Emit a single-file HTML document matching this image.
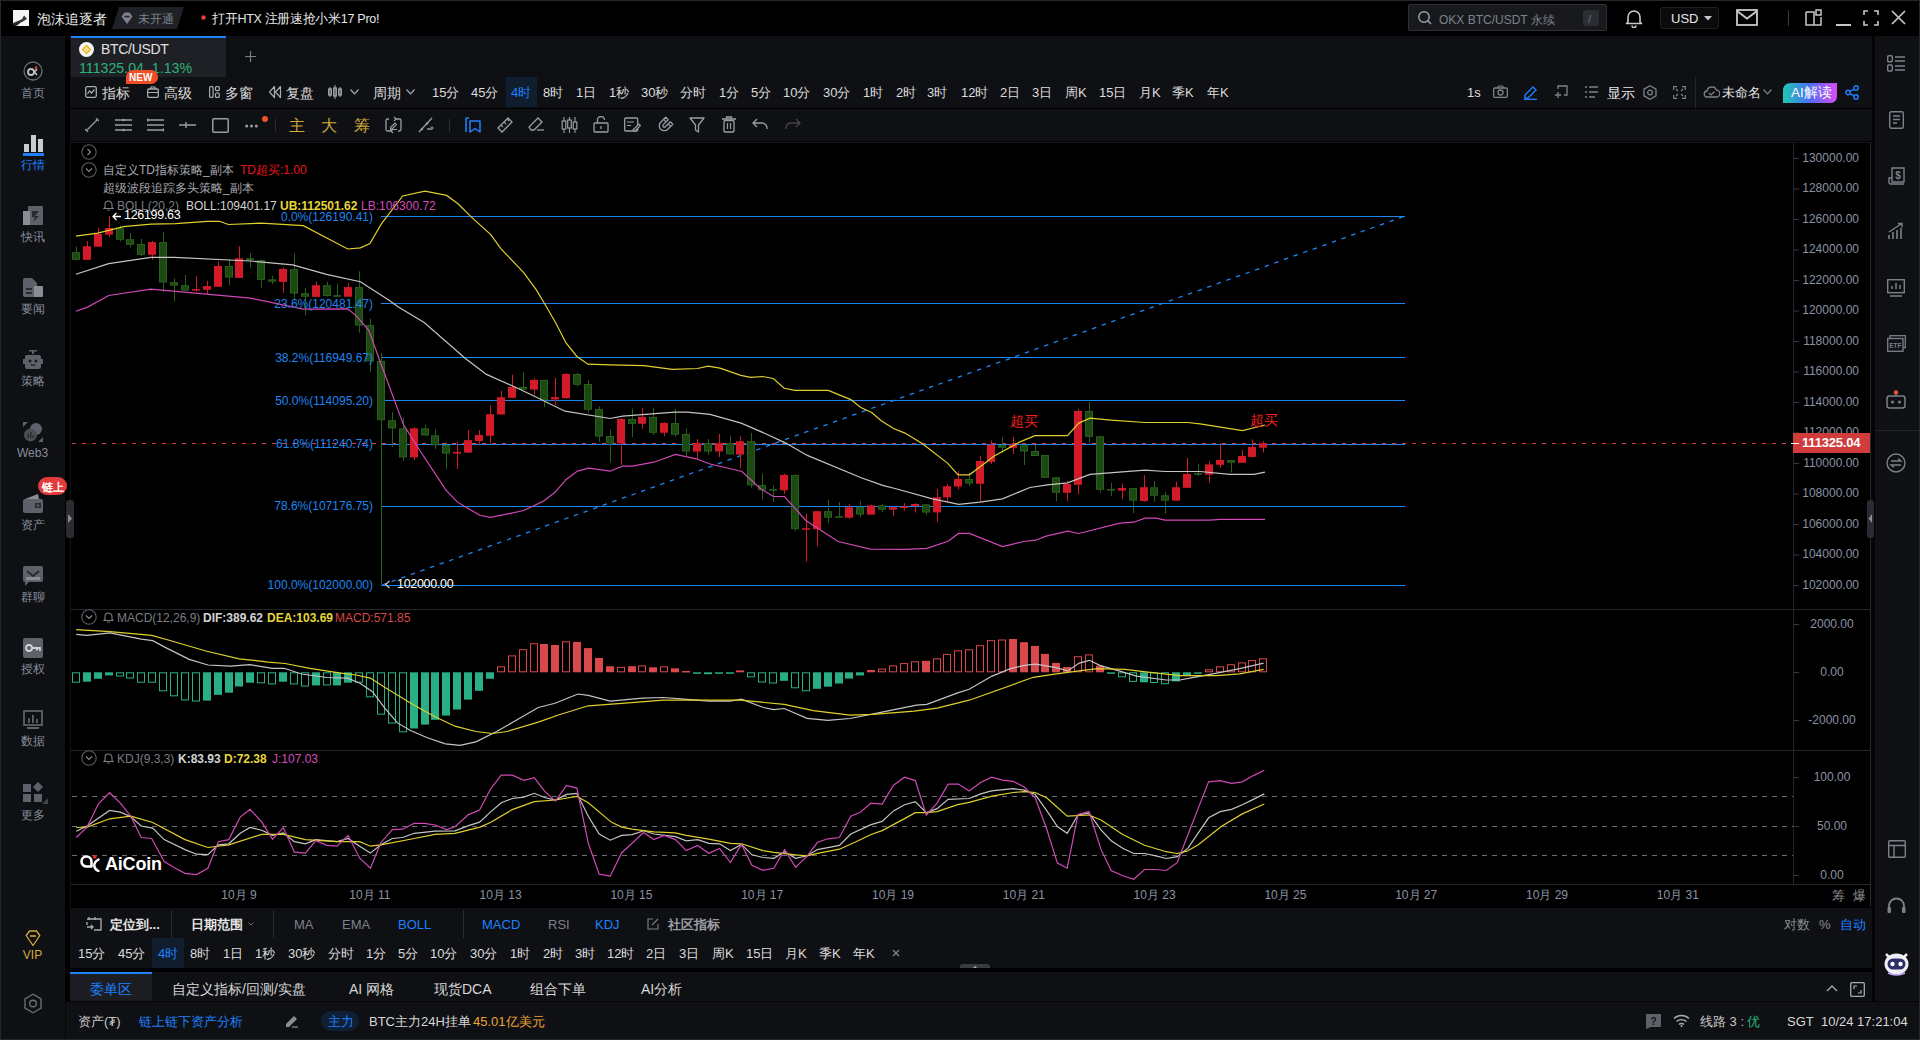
<!DOCTYPE html><html><head><meta charset="utf-8"><style>
html,body{margin:0;padding:0;width:1920px;height:1040px;overflow:hidden;background:#060607;}
body{position:relative;font-family:"Liberation Sans",sans-serif;}
.t{position:absolute;white-space:nowrap;}
.r{position:absolute;}
svg{position:absolute;left:0;top:0;}
</style></head><body>
<div class="r" style="left:0px;top:0px;width:1920px;height:36px;background:#000000;"></div>
<div class="r" style="left:0px;top:36px;width:65px;height:1004px;background:#0f1013;"></div>
<div class="r" style="left:65px;top:36px;width:5px;height:1004px;background:#000000;"></div>
<div class="r" style="left:1875px;top:36px;width:45px;height:966px;background:#0f1013;"></div>
<div class="r" style="left:1870px;top:36px;width:5px;height:966px;background:#050506;"></div>
<div class="r" style="left:70px;top:36px;width:1802px;height:41px;background:#0e0f12;"></div>
<div class="r" style="left:71px;top:38px;width:155px;height:39px;background:#1f2025;"></div>
<div class="r" style="left:71px;top:36px;width:155px;height:2px;background:#1e80ff;"></div>
<div class="r" style="left:70px;top:77px;width:1802px;height:31px;background:#0f1013;"></div>
<div class="r" style="left:70px;top:108px;width:1802px;height:1px;background:#000000;"></div>
<div class="r" style="left:70px;top:109px;width:1802px;height:32px;background:#0f1013;"></div>
<div class="r" style="left:70px;top:142px;width:1801px;height:766px;background:#000000;"></div>
<div class="r" style="left:70px;top:908px;width:1802px;height:60px;background:#0f1013;"></div>
<div class="r" style="left:152px;top:938px;width:32px;height:30px;background:#0f1d2c;"></div>
<div class="r" style="left:506px;top:77px;width:31px;height:30px;background:#0f1d2c;"></div>
<div class="r" style="left:70px;top:972px;width:1802px;height:30px;background:#0f1013;"></div>
<div class="r" style="left:70px;top:972px;width:82px;height:30px;background:#1b1d23;"></div>
<div class="r" style="left:70px;top:972px;width:82px;height:2px;background:#1e80ff;"></div>
<div class="r" style="left:65px;top:1001px;width:1855px;height:1px;background:#050506;"></div>
<div class="r" style="left:66px;top:1002px;width:1854px;height:38px;background:#0f1013;"></div>
<div class="r" style="left:65px;top:1002px;width:1px;height:38px;background:#050506;"></div>
<svg width="1920" height="1040">
<g stroke="#25262b" stroke-width="1" fill="none">
<line x1="71" y1="609.5" x2="1870" y2="609.5"/>
<line x1="71" y1="750.5" x2="1870" y2="750.5"/>
<line x1="71" y1="884.5" x2="1870" y2="884.5"/>
<line x1="1793.5" y1="142" x2="1793.5" y2="884"/>
<line x1="70.5" y1="142" x2="70.5" y2="907" stroke="#131417"/>
<line x1="70" y1="142.5" x2="1871" y2="142.5" stroke="#131417"/>
<line x1="1870.5" y1="142" x2="1870.5" y2="907"/>
</g>
<g stroke="#3a3b40" stroke-width="1">
<line x1="1794" y1="158.5" x2="1799" y2="158.5"/>
<line x1="1794" y1="189" x2="1799" y2="189"/>
<line x1="1794" y1="219.5" x2="1799" y2="219.5"/>
<line x1="1794" y1="250" x2="1799" y2="250"/>
<line x1="1794" y1="280.5" x2="1799" y2="280.5"/>
<line x1="1794" y1="311" x2="1799" y2="311"/>
<line x1="1794" y1="341.5" x2="1799" y2="341.5"/>
<line x1="1794" y1="372" x2="1799" y2="372"/>
<line x1="1794" y1="402.5" x2="1799" y2="402.5"/>
<line x1="1794" y1="433" x2="1799" y2="433"/>
<line x1="1794" y1="463.5" x2="1799" y2="463.5"/>
<line x1="1794" y1="494" x2="1799" y2="494"/>
<line x1="1794" y1="524.5" x2="1799" y2="524.5"/>
<line x1="1794" y1="555" x2="1799" y2="555"/>
<line x1="1794" y1="585.5" x2="1799" y2="585.5"/>
<line x1="1794" y1="624.5" x2="1799" y2="624.5"/>
<line x1="1794" y1="672.5" x2="1799" y2="672.5"/>
<line x1="1794" y1="720.5" x2="1799" y2="720.5"/>
<line x1="1794" y1="777.5" x2="1799" y2="777.5"/>
<line x1="1794" y1="826.5" x2="1799" y2="826.5"/>
<line x1="1794" y1="875.5" x2="1799" y2="875.5"/>
</g>
<g stroke="#6e6f74" stroke-width="1" stroke-dasharray="5,5">
<line x1="72" y1="796.5" x2="1793" y2="796.5"/>
<line x1="72" y1="826.5" x2="1793" y2="826.5"/>
<line x1="72" y1="855.5" x2="1793" y2="855.5"/>
</g>
<line x1="72" y1="443.5" x2="1793" y2="443.5" stroke="#e0393e" stroke-width="1" stroke-dasharray="4,6"/>
<g stroke="#1e86f0" stroke-width="1.2">
<line x1="381" y1="216.5" x2="1405" y2="216.5"/>
<line x1="381" y1="303.5" x2="1405" y2="303.5"/>
<line x1="381" y1="357.5" x2="1405" y2="357.5"/>
<line x1="381" y1="400.5" x2="1405" y2="400.5"/>
<line x1="381" y1="444.5" x2="1405" y2="444.5"/>
<line x1="381" y1="506.5" x2="1405" y2="506.5"/>
<line x1="381" y1="585.5" x2="1405" y2="585.5"/>
</g>
<line x1="382" y1="585" x2="1405" y2="216" stroke="#1e86f0" stroke-width="1.3" stroke-dasharray="4.5,5.7"/>
<line x1="76.5" y1="246.7" x2="76.5" y2="260.2" stroke="#2a601c" stroke-width="1"/>
<rect x="72.5" y="252.7" width="7" height="6.6" fill="#1c4812" stroke="#2a601c" stroke-width="1"/>
<line x1="87.5" y1="241" x2="87.5" y2="259.8" stroke="#d21a28" stroke-width="1"/>
<rect x="83" y="246.2" width="8" height="13.6" fill="#d21a28"/>
<line x1="98.5" y1="227.7" x2="98.5" y2="246.7" stroke="#d21a28" stroke-width="1"/>
<rect x="94" y="234" width="8" height="12.7" fill="#d21a28"/>
<line x1="109.5" y1="216" x2="109.5" y2="237.2" stroke="#d21a28" stroke-width="1"/>
<rect x="105" y="228" width="8" height="6.6" fill="#d21a28"/>
<line x1="120.5" y1="226" x2="120.5" y2="241.5" stroke="#2a601c" stroke-width="1"/>
<rect x="116.5" y="228.8" width="7" height="10.5" fill="#1c4812" stroke="#2a601c" stroke-width="1"/>
<line x1="130.5" y1="232.9" x2="130.5" y2="247.5" stroke="#2a601c" stroke-width="1"/>
<rect x="126.5" y="239.7" width="7" height="4.6" fill="#1c4812" stroke="#2a601c" stroke-width="1"/>
<line x1="141.5" y1="239" x2="141.5" y2="256" stroke="#2a601c" stroke-width="1"/>
<rect x="137.5" y="244.5" width="7" height="9.8" fill="#1c4812" stroke="#2a601c" stroke-width="1"/>
<line x1="152.5" y1="241" x2="152.5" y2="259.8" stroke="#d21a28" stroke-width="1"/>
<rect x="148" y="242.1" width="8" height="12.7" fill="#d21a28"/>
<line x1="163.5" y1="232" x2="163.5" y2="292.3" stroke="#2a601c" stroke-width="1"/>
<rect x="159.5" y="242.6" width="7" height="39.4" fill="#1c4812" stroke="#2a601c" stroke-width="1"/>
<line x1="174.5" y1="278.5" x2="174.5" y2="301.6" stroke="#2a601c" stroke-width="1"/>
<rect x="170.5" y="282.7" width="7" height="2.4" fill="#1c4812" stroke="#2a601c" stroke-width="1"/>
<line x1="185.5" y1="275" x2="185.5" y2="291.2" stroke="#2a601c" stroke-width="1"/>
<rect x="181.5" y="285.7" width="7" height="4.4" fill="#1c4812" stroke="#2a601c" stroke-width="1"/>
<line x1="196.5" y1="276.2" x2="196.5" y2="291.7" stroke="#d21a28" stroke-width="1"/>
<rect x="192" y="289.1" width="8" height="1.5" fill="#d21a28"/>
<line x1="207.5" y1="280.8" x2="207.5" y2="294" stroke="#d21a28" stroke-width="1"/>
<rect x="203" y="286" width="8" height="3.8" fill="#d21a28"/>
<line x1="218.5" y1="261.7" x2="218.5" y2="286.8" stroke="#d21a28" stroke-width="1"/>
<rect x="214" y="266" width="8" height="20.8" fill="#d21a28"/>
<line x1="229.5" y1="259.4" x2="229.5" y2="285.2" stroke="#2a601c" stroke-width="1"/>
<rect x="225.5" y="266.5" width="7" height="10.6" fill="#1c4812" stroke="#2a601c" stroke-width="1"/>
<line x1="239.5" y1="246.2" x2="239.5" y2="277.9" stroke="#d21a28" stroke-width="1"/>
<rect x="235" y="258.3" width="8" height="19.6" fill="#d21a28"/>
<line x1="250.5" y1="253" x2="250.5" y2="267.5" stroke="#2a601c" stroke-width="1"/>
<rect x="246.5" y="258.8" width="7" height="0.9" fill="#1c4812" stroke="#2a601c" stroke-width="1"/>
<line x1="261.5" y1="259.4" x2="261.5" y2="287.7" stroke="#2a601c" stroke-width="1"/>
<rect x="257.5" y="260.7" width="7" height="18.7" fill="#1c4812" stroke="#2a601c" stroke-width="1"/>
<line x1="272.5" y1="275.9" x2="272.5" y2="284" stroke="#2a601c" stroke-width="1"/>
<rect x="268.5" y="279.9" width="7" height="1.3" fill="#1c4812" stroke="#2a601c" stroke-width="1"/>
<line x1="283.5" y1="267.2" x2="283.5" y2="292.9" stroke="#d21a28" stroke-width="1"/>
<rect x="279" y="269" width="8" height="12.9" fill="#d21a28"/>
<line x1="294.5" y1="253.1" x2="294.5" y2="299.2" stroke="#2a601c" stroke-width="1"/>
<rect x="290.5" y="269.7" width="7" height="23.3" fill="#1c4812" stroke="#2a601c" stroke-width="1"/>
<line x1="305.5" y1="287.7" x2="305.5" y2="315.4" stroke="#2a601c" stroke-width="1"/>
<rect x="301.5" y="293.7" width="7" height="2.5" fill="#1c4812" stroke="#2a601c" stroke-width="1"/>
<line x1="316.5" y1="281.4" x2="316.5" y2="296.9" stroke="#d21a28" stroke-width="1"/>
<rect x="312" y="285.2" width="8" height="11.7" fill="#d21a28"/>
<line x1="327.5" y1="281.9" x2="327.5" y2="296.7" stroke="#2a601c" stroke-width="1"/>
<rect x="323.5" y="285.7" width="7" height="9.8" fill="#1c4812" stroke="#2a601c" stroke-width="1"/>
<line x1="337.5" y1="283.7" x2="337.5" y2="296.7" stroke="#2a601c" stroke-width="1"/>
<rect x="333.5" y="295.7" width="7" height="0.5" fill="#1c4812" stroke="#2a601c" stroke-width="1"/>
<line x1="348.5" y1="283.1" x2="348.5" y2="296.7" stroke="#d21a28" stroke-width="1"/>
<rect x="344" y="287.1" width="8" height="9.6" fill="#d21a28"/>
<line x1="359.5" y1="271.3" x2="359.5" y2="332.7" stroke="#2a601c" stroke-width="1"/>
<rect x="355.5" y="287.6" width="7" height="37.5" fill="#1c4812" stroke="#2a601c" stroke-width="1"/>
<line x1="370.5" y1="318.7" x2="370.5" y2="371.8" stroke="#2a601c" stroke-width="1"/>
<rect x="366.5" y="325.6" width="7" height="35.3" fill="#1c4812" stroke="#2a601c" stroke-width="1"/>
<line x1="381.5" y1="352.8" x2="381.5" y2="584" stroke="#2a601c" stroke-width="1"/>
<rect x="377.5" y="361.4" width="7" height="58.3" fill="#1c4812" stroke="#2a601c" stroke-width="1"/>
<line x1="392.5" y1="412.1" x2="392.5" y2="447.1" stroke="#2a601c" stroke-width="1"/>
<rect x="388.5" y="420.7" width="7" height="7.2" fill="#1c4812" stroke="#2a601c" stroke-width="1"/>
<line x1="403.5" y1="417.6" x2="403.5" y2="460.9" stroke="#2a601c" stroke-width="1"/>
<rect x="399.5" y="428.9" width="7" height="28" fill="#1c4812" stroke="#2a601c" stroke-width="1"/>
<line x1="414.5" y1="427.2" x2="414.5" y2="460" stroke="#d21a28" stroke-width="1"/>
<rect x="410" y="428.4" width="8" height="29" fill="#d21a28"/>
<line x1="425.5" y1="424.6" x2="425.5" y2="435.5" stroke="#2a601c" stroke-width="1"/>
<rect x="421.5" y="428.9" width="7" height="6.1" fill="#1c4812" stroke="#2a601c" stroke-width="1"/>
<line x1="435.5" y1="429.4" x2="435.5" y2="449.1" stroke="#2a601c" stroke-width="1"/>
<rect x="431.5" y="435.8" width="7" height="9" fill="#1c4812" stroke="#2a601c" stroke-width="1"/>
<line x1="446.5" y1="442.2" x2="446.5" y2="469.2" stroke="#2a601c" stroke-width="1"/>
<rect x="442.5" y="445.5" width="7" height="7.6" fill="#1c4812" stroke="#2a601c" stroke-width="1"/>
<line x1="457.5" y1="441.9" x2="457.5" y2="469.2" stroke="#d21a28" stroke-width="1"/>
<rect x="453" y="451.9" width="8" height="1.7" fill="#d21a28"/>
<line x1="468.5" y1="430.1" x2="468.5" y2="453.1" stroke="#d21a28" stroke-width="1"/>
<rect x="464" y="440.1" width="8" height="12.5" fill="#d21a28"/>
<line x1="479.5" y1="430.1" x2="479.5" y2="445.3" stroke="#d21a28" stroke-width="1"/>
<rect x="475" y="435" width="8" height="6" fill="#d21a28"/>
<line x1="490.5" y1="405.5" x2="490.5" y2="443.6" stroke="#d21a28" stroke-width="1"/>
<rect x="486" y="414.2" width="8" height="21.6" fill="#d21a28"/>
<line x1="501.5" y1="390.8" x2="501.5" y2="414.5" stroke="#d21a28" stroke-width="1"/>
<rect x="497" y="397.2" width="8" height="17.3" fill="#d21a28"/>
<line x1="512.5" y1="374.7" x2="512.5" y2="398.3" stroke="#d21a28" stroke-width="1"/>
<rect x="508" y="386.9" width="8" height="10.9" fill="#d21a28"/>
<line x1="523.5" y1="371.8" x2="523.5" y2="389.6" stroke="#2a601c" stroke-width="1"/>
<rect x="519.5" y="387.5" width="7" height="1.6" fill="#1c4812" stroke="#2a601c" stroke-width="1"/>
<line x1="534.5" y1="378.2" x2="534.5" y2="394.8" stroke="#d21a28" stroke-width="1"/>
<rect x="530" y="379.9" width="8" height="9.7" fill="#d21a28"/>
<line x1="544.5" y1="379.9" x2="544.5" y2="407.3" stroke="#2a601c" stroke-width="1"/>
<rect x="540.5" y="380.4" width="7" height="19.4" fill="#1c4812" stroke="#2a601c" stroke-width="1"/>
<line x1="555.5" y1="378.1" x2="555.5" y2="405" stroke="#d21a28" stroke-width="1"/>
<rect x="551" y="397.1" width="8" height="2.3" fill="#d21a28"/>
<line x1="566.5" y1="373.1" x2="566.5" y2="398.8" stroke="#d21a28" stroke-width="1"/>
<rect x="562" y="374" width="8" height="24.1" fill="#d21a28"/>
<line x1="577.5" y1="373.1" x2="577.5" y2="386.5" stroke="#2a601c" stroke-width="1"/>
<rect x="573.5" y="374.5" width="7" height="9.8" fill="#1c4812" stroke="#2a601c" stroke-width="1"/>
<line x1="588.5" y1="380" x2="588.5" y2="412.5" stroke="#2a601c" stroke-width="1"/>
<rect x="584.5" y="384.5" width="7" height="24.8" fill="#1c4812" stroke="#2a601c" stroke-width="1"/>
<line x1="599.5" y1="406.2" x2="599.5" y2="441.9" stroke="#2a601c" stroke-width="1"/>
<rect x="595.5" y="409.6" width="7" height="26.5" fill="#1c4812" stroke="#2a601c" stroke-width="1"/>
<line x1="610.5" y1="429.8" x2="610.5" y2="462.5" stroke="#2a601c" stroke-width="1"/>
<rect x="606.5" y="436.5" width="7" height="6.5" fill="#1c4812" stroke="#2a601c" stroke-width="1"/>
<line x1="621.5" y1="418.1" x2="621.5" y2="464.8" stroke="#d21a28" stroke-width="1"/>
<rect x="617" y="419" width="8" height="24.5" fill="#d21a28"/>
<line x1="632.5" y1="408.5" x2="632.5" y2="436.9" stroke="#2a601c" stroke-width="1"/>
<rect x="628.5" y="419.5" width="7" height="3.8" fill="#1c4812" stroke="#2a601c" stroke-width="1"/>
<line x1="642.5" y1="407.8" x2="642.5" y2="428.8" stroke="#d21a28" stroke-width="1"/>
<rect x="638" y="416.9" width="8" height="6.9" fill="#d21a28"/>
<line x1="653.5" y1="407.8" x2="653.5" y2="435" stroke="#2a601c" stroke-width="1"/>
<rect x="649.5" y="417.4" width="7" height="14.9" fill="#1c4812" stroke="#2a601c" stroke-width="1"/>
<line x1="664.5" y1="422.2" x2="664.5" y2="436.2" stroke="#d21a28" stroke-width="1"/>
<rect x="660" y="422.9" width="8" height="9.9" fill="#d21a28"/>
<line x1="675.5" y1="409" x2="675.5" y2="436.9" stroke="#2a601c" stroke-width="1"/>
<rect x="671.5" y="423.6" width="7" height="10.6" fill="#1c4812" stroke="#2a601c" stroke-width="1"/>
<line x1="686.5" y1="428.5" x2="686.5" y2="456.2" stroke="#2a601c" stroke-width="1"/>
<rect x="682.5" y="434.5" width="7" height="16.5" fill="#1c4812" stroke="#2a601c" stroke-width="1"/>
<line x1="697.5" y1="439" x2="697.5" y2="460" stroke="#d21a28" stroke-width="1"/>
<rect x="693" y="443.1" width="8" height="8.4" fill="#d21a28"/>
<line x1="708.5" y1="439" x2="708.5" y2="454.8" stroke="#2a601c" stroke-width="1"/>
<rect x="704.5" y="443.6" width="7" height="7.4" fill="#1c4812" stroke="#2a601c" stroke-width="1"/>
<line x1="719.5" y1="434" x2="719.5" y2="457.2" stroke="#d21a28" stroke-width="1"/>
<rect x="715" y="443.1" width="8" height="8.4" fill="#d21a28"/>
<line x1="730.5" y1="435.6" x2="730.5" y2="454.4" stroke="#2a601c" stroke-width="1"/>
<rect x="726.5" y="443.6" width="7" height="10.3" fill="#1c4812" stroke="#2a601c" stroke-width="1"/>
<line x1="740.5" y1="436.2" x2="740.5" y2="468.2" stroke="#d21a28" stroke-width="1"/>
<rect x="736" y="441.2" width="8" height="13.4" fill="#d21a28"/>
<line x1="751.5" y1="432.8" x2="751.5" y2="487.7" stroke="#2a601c" stroke-width="1"/>
<rect x="747.5" y="441.7" width="7" height="43.2" fill="#1c4812" stroke="#2a601c" stroke-width="1"/>
<line x1="762.5" y1="473.8" x2="762.5" y2="499.5" stroke="#2a601c" stroke-width="1"/>
<rect x="758.5" y="485.6" width="7" height="4.2" fill="#1c4812" stroke="#2a601c" stroke-width="1"/>
<line x1="773.5" y1="485.4" x2="773.5" y2="502" stroke="#2a601c" stroke-width="1"/>
<rect x="769.5" y="489.7" width="7" height="0.5" fill="#1c4812" stroke="#2a601c" stroke-width="1"/>
<line x1="784.5" y1="473.8" x2="784.5" y2="493.8" stroke="#d21a28" stroke-width="1"/>
<rect x="780" y="474.9" width="8" height="15.4" fill="#d21a28"/>
<line x1="795.5" y1="474.3" x2="795.5" y2="530.8" stroke="#2a601c" stroke-width="1"/>
<rect x="791.5" y="475.4" width="7" height="53.3" fill="#1c4812" stroke="#2a601c" stroke-width="1"/>
<line x1="806.5" y1="513.8" x2="806.5" y2="561.5" stroke="#d21a28" stroke-width="1"/>
<rect x="802" y="528.2" width="8" height="1.5" fill="#d21a28"/>
<line x1="817.5" y1="510.8" x2="817.5" y2="546.2" stroke="#d21a28" stroke-width="1"/>
<rect x="813" y="511.2" width="8" height="18" fill="#d21a28"/>
<line x1="828.5" y1="499.5" x2="828.5" y2="522.6" stroke="#2a601c" stroke-width="1"/>
<rect x="824.5" y="511.7" width="7" height="5.5" fill="#1c4812" stroke="#2a601c" stroke-width="1"/>
<line x1="839.5" y1="502" x2="839.5" y2="517.7" stroke="#2a601c" stroke-width="1"/>
<rect x="835.5" y="516.7" width="7" height="0.5" fill="#1c4812" stroke="#2a601c" stroke-width="1"/>
<line x1="849.5" y1="503.8" x2="849.5" y2="518.9" stroke="#d21a28" stroke-width="1"/>
<rect x="845" y="507.2" width="8" height="10.5" fill="#d21a28"/>
<line x1="860.5" y1="501.1" x2="860.5" y2="516.9" stroke="#2a601c" stroke-width="1"/>
<rect x="856.5" y="507.7" width="7" height="6.4" fill="#1c4812" stroke="#2a601c" stroke-width="1"/>
<line x1="871.5" y1="504.6" x2="871.5" y2="514.6" stroke="#d21a28" stroke-width="1"/>
<rect x="867" y="505.4" width="8" height="9.2" fill="#d21a28"/>
<line x1="882.5" y1="504.2" x2="882.5" y2="512.3" stroke="#2a601c" stroke-width="1"/>
<rect x="878.5" y="505.9" width="7" height="3.3" fill="#1c4812" stroke="#2a601c" stroke-width="1"/>
<line x1="893.5" y1="506.9" x2="893.5" y2="516.2" stroke="#d21a28" stroke-width="1"/>
<rect x="889" y="507.2" width="8" height="2.5" fill="#d21a28"/>
<line x1="904.5" y1="503.1" x2="904.5" y2="510.6" stroke="#d21a28" stroke-width="1"/>
<rect x="900" y="506.5" width="8" height="1.5" fill="#d21a28"/>
<line x1="915.5" y1="503.1" x2="915.5" y2="512.5" stroke="#d21a28" stroke-width="1"/>
<rect x="911" y="504" width="8" height="2" fill="#d21a28"/>
<line x1="926.5" y1="504" x2="926.5" y2="515" stroke="#2a601c" stroke-width="1"/>
<rect x="922.5" y="504.9" width="7" height="7.1" fill="#1c4812" stroke="#2a601c" stroke-width="1"/>
<line x1="937.5" y1="489" x2="937.5" y2="521.9" stroke="#d21a28" stroke-width="1"/>
<rect x="933" y="497.2" width="8" height="15.2" fill="#d21a28"/>
<line x1="947.5" y1="484" x2="947.5" y2="501.9" stroke="#d21a28" stroke-width="1"/>
<rect x="943" y="486.2" width="8" height="11.2" fill="#d21a28"/>
<line x1="958.5" y1="471.2" x2="958.5" y2="489.4" stroke="#d21a28" stroke-width="1"/>
<rect x="954" y="479" width="8" height="7.5" fill="#d21a28"/>
<line x1="969.5" y1="472.5" x2="969.5" y2="486" stroke="#2a601c" stroke-width="1"/>
<rect x="965.5" y="479.5" width="7" height="3.5" fill="#1c4812" stroke="#2a601c" stroke-width="1"/>
<line x1="980.5" y1="456.2" x2="980.5" y2="501.9" stroke="#d21a28" stroke-width="1"/>
<rect x="976" y="461" width="8" height="22.8" fill="#d21a28"/>
<line x1="991.5" y1="440.6" x2="991.5" y2="463.8" stroke="#d21a28" stroke-width="1"/>
<rect x="987" y="444.8" width="8" height="17.1" fill="#d21a28"/>
<line x1="1002.5" y1="437.2" x2="1002.5" y2="453.1" stroke="#2a601c" stroke-width="1"/>
<rect x="998.5" y="445.5" width="7" height="1.8" fill="#1c4812" stroke="#2a601c" stroke-width="1"/>
<line x1="1013.5" y1="436.9" x2="1013.5" y2="454" stroke="#d21a28" stroke-width="1"/>
<rect x="1009" y="444.4" width="8" height="3.4" fill="#d21a28"/>
<line x1="1024.5" y1="444.8" x2="1024.5" y2="465" stroke="#2a601c" stroke-width="1"/>
<rect x="1020.5" y="445.8" width="7" height="5.2" fill="#1c4812" stroke="#2a601c" stroke-width="1"/>
<line x1="1035.5" y1="445" x2="1035.5" y2="456" stroke="#2a601c" stroke-width="1"/>
<rect x="1031.5" y="451.5" width="7" height="4" fill="#1c4812" stroke="#2a601c" stroke-width="1"/>
<line x1="1045.5" y1="455" x2="1045.5" y2="477.8" stroke="#2a601c" stroke-width="1"/>
<rect x="1041.5" y="455.5" width="7" height="21.8" fill="#1c4812" stroke="#2a601c" stroke-width="1"/>
<line x1="1056.5" y1="477.2" x2="1056.5" y2="501" stroke="#2a601c" stroke-width="1"/>
<rect x="1052.5" y="477.8" width="7" height="14.5" fill="#1c4812" stroke="#2a601c" stroke-width="1"/>
<line x1="1067.5" y1="481" x2="1067.5" y2="501" stroke="#d21a28" stroke-width="1"/>
<rect x="1063" y="484" width="8" height="8.8" fill="#d21a28"/>
<line x1="1078.5" y1="408.8" x2="1078.5" y2="494.4" stroke="#d21a28" stroke-width="1"/>
<rect x="1074" y="411" width="8" height="73.8" fill="#d21a28"/>
<line x1="1089.5" y1="401.9" x2="1089.5" y2="442.5" stroke="#2a601c" stroke-width="1"/>
<rect x="1085.5" y="411.5" width="7" height="24.9" fill="#1c4812" stroke="#2a601c" stroke-width="1"/>
<line x1="1100.5" y1="435.6" x2="1100.5" y2="492.5" stroke="#2a601c" stroke-width="1"/>
<rect x="1096.5" y="436.8" width="7" height="52.5" fill="#1c4812" stroke="#2a601c" stroke-width="1"/>
<line x1="1111.5" y1="482.8" x2="1111.5" y2="496" stroke="#2a601c" stroke-width="1"/>
<rect x="1107.5" y="489.5" width="7" height="0.6" fill="#1c4812" stroke="#2a601c" stroke-width="1"/>
<line x1="1122.5" y1="483.5" x2="1122.5" y2="499.4" stroke="#d21a28" stroke-width="1"/>
<rect x="1118" y="488.1" width="8" height="2.5" fill="#d21a28"/>
<line x1="1133.5" y1="487.8" x2="1133.5" y2="513.1" stroke="#2a601c" stroke-width="1"/>
<rect x="1129.5" y="488.6" width="7" height="11.5" fill="#1c4812" stroke="#2a601c" stroke-width="1"/>
<line x1="1144.5" y1="475.2" x2="1144.5" y2="501.9" stroke="#d21a28" stroke-width="1"/>
<rect x="1140" y="487.2" width="8" height="13.8" fill="#d21a28"/>
<line x1="1154.5" y1="481" x2="1154.5" y2="501.9" stroke="#2a601c" stroke-width="1"/>
<rect x="1150.5" y="487.8" width="7" height="7.4" fill="#1c4812" stroke="#2a601c" stroke-width="1"/>
<line x1="1165.5" y1="492.2" x2="1165.5" y2="513.8" stroke="#2a601c" stroke-width="1"/>
<rect x="1161.5" y="495.8" width="7" height="4.4" fill="#1c4812" stroke="#2a601c" stroke-width="1"/>
<line x1="1176.5" y1="481.9" x2="1176.5" y2="500.6" stroke="#d21a28" stroke-width="1"/>
<rect x="1172" y="487.2" width="8" height="13.4" fill="#d21a28"/>
<line x1="1187.5" y1="458.1" x2="1187.5" y2="487.8" stroke="#d21a28" stroke-width="1"/>
<rect x="1183" y="474" width="8" height="13.8" fill="#d21a28"/>
<line x1="1198.5" y1="464" x2="1198.5" y2="476.5" stroke="#2a601c" stroke-width="1"/>
<rect x="1194.5" y="473.6" width="7" height="0.6" fill="#1c4812" stroke="#2a601c" stroke-width="1"/>
<line x1="1209.5" y1="461.2" x2="1209.5" y2="482.8" stroke="#d21a28" stroke-width="1"/>
<rect x="1205" y="464.4" width="8" height="10.4" fill="#d21a28"/>
<line x1="1220.5" y1="443.1" x2="1220.5" y2="468.1" stroke="#d21a28" stroke-width="1"/>
<rect x="1216" y="460" width="8" height="4.8" fill="#d21a28"/>
<line x1="1231.5" y1="460" x2="1231.5" y2="472.5" stroke="#2a601c" stroke-width="1"/>
<rect x="1227.5" y="460.5" width="7" height="1.8" fill="#1c4812" stroke="#2a601c" stroke-width="1"/>
<line x1="1242.5" y1="450" x2="1242.5" y2="462.8" stroke="#d21a28" stroke-width="1"/>
<rect x="1238" y="456" width="8" height="6.8" fill="#d21a28"/>
<line x1="1252.5" y1="439.4" x2="1252.5" y2="457.8" stroke="#d21a28" stroke-width="1"/>
<rect x="1248" y="446.9" width="8" height="10" fill="#d21a28"/>
<line x1="1263.5" y1="441" x2="1263.5" y2="452.5" stroke="#d21a28" stroke-width="1"/>
<rect x="1259" y="443.1" width="8" height="4.6" fill="#d21a28"/>
<polyline points="75.9,236.2 97.7,233.1 123.5,226.7 151,224.2 175.4,223.7 207.7,221.3 219.3,221.3 228.5,224.5 261,223.1 303.3,225.7 347.7,249 360.4,247.9 369.9,243.6 381.5,223.6 402.7,196 424.9,191.2 446.7,195.4 458.3,204 469.8,215.6 491,234.8 500.6,248.3 523.7,272.7 536.2,289.6 544.8,304 555.4,322.3 566,343 576.9,356.5 588,364.2 610,364.8 643.8,365.6 672.5,369.4 697.5,368.5 708.1,366.2 720,368.2 740.8,375.4 750.8,377.3 762.5,376.5 773.3,378.5 784.2,388.3 795,390.4 828.3,390.4 850.8,399.6 860.8,407.5 871.7,412.5 881.2,420.8 893.5,428.5 905,433.1 922.5,443.8 947.5,463.1 958.1,474.8 969.4,474.8 982.5,465 993.8,456.2 1020,441.9 1035,435.6 1067.5,435.6 1078.8,423.1 1090,418.1 1111.2,420.2 1145,422.5 1187.5,422.5 1200,423.8 1242.5,430.6 1265,425" fill="none" stroke="#ded02c" stroke-width="1.2"/>
<polyline points="75.9,274.3 108.7,263.7 151,257.4 174.2,257.4 250.4,261 292.7,264.8 326.5,274.3 360.4,281.7 388.7,300 398.4,307.1 424.2,322.5 465.7,358.8 486.5,374.4 517.6,388.2 535,396.5 565,411.2 610,418.5 622.5,416.2 675,412.2 687.5,412.2 710,414.4 741.2,423.1 766.7,434.2 785.8,443.1 807.3,455.4 861.2,477.7 882.7,485.4 895,488.5 932.5,498.8 958.8,504.4 980,502.2 1002.5,498.8 1030,487.5 1047.5,484.8 1067.5,482.8 1090,474.4 1145,470.2 1165,471.5 1200,471.5 1230,474.4 1253.8,474.4 1265,472.2" fill="none" stroke="#c4c4c4" stroke-width="1.2"/>
<polyline points="75.9,311.3 87.5,307.1 108.7,295.5 151,289.1 250.4,298.2 303.3,309.2 347.7,308.8 356.1,315.6 368.8,330.4 381,364 403.4,424.6 420,450.8 446,490.2 457.2,501.9 479.7,515.3 490.5,517.4 523.8,510.5 543.7,501 555,492.3 566.2,479.4 577.4,471.1 588.8,468.1 610,471.2 622.5,466.2 632.5,466.2 653.8,462.2 675.6,454.4 696.2,458.8 710,464 741.9,471.5 761.2,489.2 773.5,496.5 784.5,496.5 805.8,520.5 838.1,541.5 870.4,549.2 905,549.4 926.9,548.4 948.1,541.2 958.5,533.4 969.4,533.4 1002.5,546.5 1023.8,541.5 1035.6,540.2 1046.2,536.2 1067.5,531.2 1078.8,533.5 1120,523.1 1133.8,522.2 1145,518.1 1156.2,518.1 1165,520.2 1210,520.2 1220,519.4 1265,519.4" fill="none" stroke="#cf49b6" stroke-width="1.2"/>
<rect x="72.5" y="672.8" width="7" height="9.4" fill="none" stroke="#2aae86" stroke-width="1"/>
<rect x="83" y="672.3" width="8" height="9.4" fill="#2aae86"/>
<rect x="94" y="672.3" width="8" height="6.5" fill="#2aae86"/>
<rect x="105" y="672.3" width="8" height="3.1" fill="#2aae86"/>
<rect x="116.5" y="672.8" width="7" height="3.2" fill="none" stroke="#2aae86" stroke-width="1"/>
<rect x="126.5" y="672.8" width="7" height="5.2" fill="none" stroke="#2aae86" stroke-width="1"/>
<rect x="137.5" y="672.8" width="7" height="9.4" fill="none" stroke="#2aae86" stroke-width="1"/>
<rect x="148.5" y="672.8" width="7" height="9.4" fill="none" stroke="#2aae86" stroke-width="1"/>
<rect x="159.5" y="672.8" width="7" height="18" fill="none" stroke="#2aae86" stroke-width="1"/>
<rect x="170.5" y="672.8" width="7" height="23" fill="none" stroke="#2aae86" stroke-width="1"/>
<rect x="181.5" y="672.8" width="7" height="27.1" fill="none" stroke="#2aae86" stroke-width="1"/>
<rect x="192.5" y="672.8" width="7" height="28.2" fill="none" stroke="#2aae86" stroke-width="1"/>
<rect x="203" y="672.3" width="8" height="28.3" fill="#2aae86"/>
<rect x="214" y="672.3" width="8" height="22.5" fill="#2aae86"/>
<rect x="225" y="672.3" width="8" height="20.4" fill="#2aae86"/>
<rect x="235" y="672.3" width="8" height="14.2" fill="#2aae86"/>
<rect x="246" y="672.3" width="8" height="10.4" fill="#2aae86"/>
<rect x="257.5" y="672.8" width="7" height="10" fill="none" stroke="#2aae86" stroke-width="1"/>
<rect x="268.5" y="672.8" width="7" height="11.1" fill="none" stroke="#2aae86" stroke-width="1"/>
<rect x="279" y="672.3" width="8" height="9.4" fill="#2aae86"/>
<rect x="290.5" y="672.8" width="7" height="11.1" fill="none" stroke="#2aae86" stroke-width="1"/>
<rect x="301.5" y="672.8" width="7" height="13.2" fill="none" stroke="#2aae86" stroke-width="1"/>
<rect x="312" y="672.3" width="8" height="13.1" fill="#2aae86"/>
<rect x="323.5" y="672.8" width="7" height="12.1" fill="none" stroke="#2aae86" stroke-width="1"/>
<rect x="333" y="672.3" width="8" height="13.1" fill="#2aae86"/>
<rect x="344" y="672.3" width="8" height="10.4" fill="#2aae86"/>
<rect x="355.5" y="672.8" width="7" height="9.4" fill="none" stroke="#2aae86" stroke-width="1"/>
<rect x="366.5" y="672.8" width="7" height="24" fill="none" stroke="#2aae86" stroke-width="1"/>
<rect x="377.5" y="672.8" width="7" height="41.3" fill="none" stroke="#2aae86" stroke-width="1"/>
<rect x="388.5" y="672.8" width="7" height="50.2" fill="none" stroke="#2aae86" stroke-width="1"/>
<rect x="399.5" y="672.8" width="7" height="59" fill="none" stroke="#2aae86" stroke-width="1"/>
<rect x="410" y="672.3" width="8" height="56.2" fill="#2aae86"/>
<rect x="421" y="672.3" width="8" height="52.3" fill="#2aae86"/>
<rect x="431" y="672.3" width="8" height="47.5" fill="#2aae86"/>
<rect x="442" y="672.3" width="8" height="43.3" fill="#2aae86"/>
<rect x="453" y="672.3" width="8" height="37.2" fill="#2aae86"/>
<rect x="464" y="672.3" width="8" height="27.3" fill="#2aae86"/>
<rect x="475" y="672.3" width="8" height="18.5" fill="#2aae86"/>
<rect x="486" y="672.3" width="8" height="6.5" fill="#2aae86"/>
<rect x="497.5" y="666.8" width="7" height="5" fill="none" stroke="#d9484a" stroke-width="1"/>
<rect x="508.5" y="655.9" width="7" height="15.9" fill="none" stroke="#d9484a" stroke-width="1"/>
<rect x="519.5" y="649.7" width="7" height="22.1" fill="none" stroke="#d9484a" stroke-width="1"/>
<rect x="530.5" y="643.8" width="7" height="28" fill="none" stroke="#d9484a" stroke-width="1"/>
<rect x="540" y="644" width="8" height="28.3" fill="#d9484a"/>
<rect x="551" y="645" width="8" height="27.3" fill="#d9484a"/>
<rect x="562.5" y="641.8" width="7" height="30" fill="none" stroke="#d9484a" stroke-width="1"/>
<rect x="573" y="641.9" width="8" height="30.4" fill="#d9484a"/>
<rect x="584" y="648.1" width="8" height="24.2" fill="#d9484a"/>
<rect x="595" y="657.9" width="8" height="14.4" fill="#d9484a"/>
<rect x="606" y="666.2" width="8" height="6" fill="#d9484a"/>
<rect x="617.5" y="667.4" width="7" height="4.4" fill="none" stroke="#d9484a" stroke-width="1"/>
<rect x="628" y="666.2" width="8" height="6" fill="#d9484a"/>
<rect x="638.5" y="665.9" width="7" height="5.9" fill="none" stroke="#d9484a" stroke-width="1"/>
<rect x="649" y="667.3" width="8" height="5" fill="#d9484a"/>
<rect x="660.5" y="666.8" width="7" height="5" fill="none" stroke="#d9484a" stroke-width="1"/>
<rect x="671" y="668.3" width="8" height="4" fill="#d9484a"/>
<rect x="682" y="671" width="8" height="1.5" fill="#d9484a"/>
<rect x="693" y="672.3" width="8" height="1.5" fill="#2aae86"/>
<rect x="704.5" y="672.8" width="7" height="0.9" fill="none" stroke="#2aae86" stroke-width="1"/>
<rect x="715" y="672.3" width="8" height="1.5" fill="#2aae86"/>
<rect x="726" y="672.3" width="8" height="1.5" fill="#2aae86"/>
<rect x="736" y="670.4" width="8" height="1.9" fill="#d9484a"/>
<rect x="747.5" y="672.8" width="7" height="4" fill="none" stroke="#2aae86" stroke-width="1"/>
<rect x="758.5" y="672.8" width="7" height="9.2" fill="none" stroke="#2aae86" stroke-width="1"/>
<rect x="769.5" y="672.8" width="7" height="10.2" fill="none" stroke="#2aae86" stroke-width="1"/>
<rect x="780" y="672.3" width="8" height="8.5" fill="#2aae86"/>
<rect x="791.5" y="672.8" width="7" height="15" fill="none" stroke="#2aae86" stroke-width="1"/>
<rect x="802.5" y="672.8" width="7" height="18" fill="none" stroke="#2aae86" stroke-width="1"/>
<rect x="813" y="672.3" width="8" height="16.5" fill="#2aae86"/>
<rect x="824" y="672.3" width="8" height="14.4" fill="#2aae86"/>
<rect x="835" y="672.3" width="8" height="11.2" fill="#2aae86"/>
<rect x="845" y="672.3" width="8" height="6.3" fill="#2aae86"/>
<rect x="856" y="672.3" width="8" height="3.2" fill="#2aae86"/>
<rect x="867" y="670" width="8" height="2.3" fill="#d9484a"/>
<rect x="878.5" y="669.1" width="7" height="2.7" fill="none" stroke="#d9484a" stroke-width="1"/>
<rect x="889.5" y="665.9" width="7" height="5.9" fill="none" stroke="#d9484a" stroke-width="1"/>
<rect x="900.5" y="663.6" width="7" height="8.2" fill="none" stroke="#d9484a" stroke-width="1"/>
<rect x="911.5" y="661.8" width="7" height="10" fill="none" stroke="#d9484a" stroke-width="1"/>
<rect x="922" y="660.8" width="8" height="11.5" fill="#d9484a"/>
<rect x="933.5" y="658.8" width="7" height="13" fill="none" stroke="#d9484a" stroke-width="1"/>
<rect x="943.5" y="654.4" width="7" height="17.4" fill="none" stroke="#d9484a" stroke-width="1"/>
<rect x="954.5" y="650.8" width="7" height="21" fill="none" stroke="#d9484a" stroke-width="1"/>
<rect x="965.5" y="649.8" width="7" height="22" fill="none" stroke="#d9484a" stroke-width="1"/>
<rect x="976.5" y="645.7" width="7" height="26.1" fill="none" stroke="#d9484a" stroke-width="1"/>
<rect x="987.5" y="640.7" width="7" height="31.1" fill="none" stroke="#d9484a" stroke-width="1"/>
<rect x="998.5" y="640" width="7" height="31.8" fill="none" stroke="#d9484a" stroke-width="1"/>
<rect x="1009" y="639" width="8" height="33.3" fill="#d9484a"/>
<rect x="1020" y="642.2" width="8" height="30.1" fill="#d9484a"/>
<rect x="1031" y="645.9" width="8" height="26.4" fill="#d9484a"/>
<rect x="1041" y="653.9" width="8" height="18.4" fill="#d9484a"/>
<rect x="1052" y="662.9" width="8" height="9.4" fill="#d9484a"/>
<rect x="1063" y="667" width="8" height="5.3" fill="#d9484a"/>
<rect x="1074.5" y="656.7" width="7" height="15.1" fill="none" stroke="#d9484a" stroke-width="1"/>
<rect x="1085.5" y="654.9" width="7" height="16.9" fill="none" stroke="#d9484a" stroke-width="1"/>
<rect x="1096" y="665.8" width="8" height="6.5" fill="#d9484a"/>
<rect x="1107" y="672.3" width="8" height="1.5" fill="#2aae86"/>
<rect x="1118.5" y="672.8" width="7" height="4" fill="none" stroke="#2aae86" stroke-width="1"/>
<rect x="1129.5" y="672.8" width="7" height="8.6" fill="none" stroke="#2aae86" stroke-width="1"/>
<rect x="1140" y="672.3" width="8" height="10" fill="#2aae86"/>
<rect x="1150.5" y="672.8" width="7" height="9.7" fill="none" stroke="#2aae86" stroke-width="1"/>
<rect x="1161.5" y="672.8" width="7" height="10.9" fill="none" stroke="#2aae86" stroke-width="1"/>
<rect x="1172" y="672.3" width="8" height="9.1" fill="#2aae86"/>
<rect x="1183" y="672.3" width="8" height="2.7" fill="#2aae86"/>
<rect x="1194" y="672.3" width="8" height="1.5" fill="#2aae86"/>
<rect x="1205.5" y="669.8" width="7" height="2" fill="none" stroke="#d9484a" stroke-width="1"/>
<rect x="1216.5" y="666.8" width="7" height="5" fill="none" stroke="#d9484a" stroke-width="1"/>
<rect x="1227.5" y="664.7" width="7" height="7.1" fill="none" stroke="#d9484a" stroke-width="1"/>
<rect x="1238.5" y="662.9" width="7" height="8.9" fill="none" stroke="#d9484a" stroke-width="1"/>
<rect x="1248.5" y="660.6" width="7" height="11.2" fill="none" stroke="#d9484a" stroke-width="1"/>
<rect x="1259.5" y="658.8" width="7" height="13" fill="none" stroke="#d9484a" stroke-width="1"/>
<polyline points="76.2,634.4 87,635.4 110,632.9 141.2,639.2 152.7,640.6 164.2,646.9 189.2,659.4 207.9,665 230.8,666.2 249.6,664.6 272.5,668.3 284,668.3 301.7,674 326.7,677.5 347.5,678.1 360,683.3 372.5,691.7 385,708.3 397.5,722.9 410,730.2 426.7,737.5 445.4,743.8 460,745.4 475.8,741.9 496.7,731.5 517.5,719.6 538.3,707.5 555,703.3 577.9,694 588.3,695.4 610.2,701.2 642.5,698.1 663.3,697.5 684.2,699.2 709.2,701.2 730,701.2 741.5,699.2 763.3,707.5 773.8,709.6 784.2,708.5 807.1,718.3 827.9,720.4 850,718.5 884.4,711.7 916.5,705.2 926.8,704.3 957.7,692.9 969.2,689.2 992.1,676.1 1010.4,668.6 1024.2,665.4 1035.6,664.2 1056.2,667.7 1067.7,670.9 1079.2,663.1 1089.5,660.3 1099.8,665.4 1125,672.7 1136.5,676.1 1166.2,680 1180,680 1193.8,677.3 1216.7,673.2 1239.6,668.6 1263.6,663.1" fill="none" stroke="#c4c4c4" stroke-width="1.2"/>
<polyline points="76.2,629.6 110,631.7 151.7,635.4 168.3,640 205.8,651 239.2,658.8 268.3,662.1 285,663.5 310,668.3 339.2,672.9 355.8,675 370.4,678.1 385,687.5 414.2,705.2 435,716.7 455,726.2 475.8,731.5 492.5,733.5 507.1,731.5 538.3,722.1 559.2,714.8 588.3,705.8 621.7,703.3 663.3,700.2 705,700.2 740.4,700.2 784.2,704.4 813.3,710.6 850,715.1 872.9,714.4 914.2,711.2 937.1,708.2 969.2,700.2 1033.3,677.3 1056.2,673.9 1079.2,670.9 1097.5,668.6 1125,669.3 1147.9,672.2 1180,675.7 1216.7,675.7 1239.6,673.9 1263.6,669.3" fill="none" stroke="#ded02c" stroke-width="1.2"/>
<polyline points="76.2,831.2 87.1,826 109.6,810.4 120.4,812.1 130.8,816.7 141.2,826 152.7,828.1 164.2,839.6 185,849.6 196.5,854.2 207.9,854.6 218.3,844.8 228.8,843.8 240.2,833.3 250,827.5 261.7,830.2 272.5,835.4 283.3,832.9 294.4,841.7 305.4,843.8 315.8,839.6 337.1,841.7 348.1,838.5 359.6,846.2 370.4,853.1 380.8,844.8 392.3,838.5 402.7,837.5 414.2,833.3 435,831.2 455,830.8 468.5,825.6 479.6,822.1 490.4,812.1 501.2,802.7 512.3,798.5 523.8,797.1 534.2,793.3 544.6,797.5 555.4,800 566.5,794.4 576.9,793.3 588.3,816.2 599.2,834 610.2,840.2 621.7,835.4 632.1,834.6 643.5,830.8 654,834 675.4,836.7 686.2,840.8 697.7,839.6 708.8,843.3 719.6,843.8 730.4,850.6 741.5,844.4 751.9,854.8 762.9,857.5 773.8,858.3 784.6,851.7 795.6,858.3 807.1,855.8 817.5,849.6 839.4,845.4 850.8,834 871.1,824.6 882.1,821.4 893.5,810.9 904.5,804.7 915.3,801.7 926.3,812.7 937.1,808.6 948.1,799.4 969.2,798.5 980.6,793.9 991.6,790.9 1013.2,788.6 1024.2,790.2 1035.2,794.4 1046.6,810.4 1057.4,826.5 1067.2,833.3 1078,815 1089,813.2 1101,829.9 1111.2,840.7 1122.7,848.2 1133.7,853.5 1144.5,853.5 1155.9,855.8 1166.2,858.5 1177.2,856.7 1188,848.2 1198.3,832.9 1208.6,817.8 1220.1,811.6 1231.6,809.3 1242.3,804.7 1253.3,799.4 1264.3,793.9" fill="none" stroke="#c4c4c4" stroke-width="1.2"/>
<polyline points="76.2,827.5 87.1,827.1 109.6,818.8 130.8,816.2 152.7,822.5 185,839.6 207.9,847.5 228.8,844.8 261.7,834.4 283.3,834.4 305.4,839.6 337.1,841.7 359.6,841.7 370.4,846.2 380.8,844.8 414.2,838.5 435,834.4 455,833.3 480,827.1 490.4,822.5 512.3,809.6 534.2,801.7 555.4,800 576.9,796.5 588.3,802.7 611.2,822.1 621.7,827.1 632.1,829.2 654,831.9 675.4,832.9 686.2,835.4 708.8,839.2 730.4,843.3 741.5,843.8 762.9,850.6 773.8,852.3 795.6,854.8 807.1,855.8 817.5,853.3 839.4,849.2 855,842.3 871.1,834.5 882.1,830.6 905,818.4 915.3,812.7 926.3,812.7 937.1,811.6 957.7,804.7 969.2,802.4 992.1,796.2 1013.2,792.5 1024.2,791.6 1035.2,792.5 1046.6,797.8 1067.2,816.1 1089,815 1101,820 1122.7,834.5 1144.5,845.2 1166.2,851.7 1177.2,853.5 1186.9,851.2 1198.3,844.8 1221.2,826.5 1242.3,813.9 1264.3,804" fill="none" stroke="#ded02c" stroke-width="1.2"/>
<polyline points="76.2,837.5 87.1,827.1 98.5,803.8 109.6,792.7 120.4,803.1 130.8,816.2 141.2,837.5 151.7,838.5 164.2,861.5 174.6,867.7 185,873.3 196.5,874.6 207.9,868.3 218.3,841.7 228.8,839.6 240.2,817.1 250,809.4 261.7,821.9 272.5,839.2 283.3,827.7 294.4,852.1 305.4,853.1 315.8,840.6 326.7,845.4 337.1,846.2 348.1,835.4 359.6,857.9 370.4,868.3 380.8,842.7 392.3,829.6 402.7,829.2 414.2,823.3 424.6,823.3 435,825 446.5,829.6 455,826.7 468.5,814.6 479.6,810 490.4,789.2 501.2,775.2 512.3,775.2 523.8,780.4 534.2,777.7 544.6,791.2 555.4,801.2 566.5,785.4 576.9,788.1 588.3,843.3 599.2,874.2 610.2,876.2 621.7,852.7 632.1,843.3 643.5,832.5 654,839.6 664.4,835.4 675.4,839.6 686.2,850.6 697.7,845.4 708.8,853.3 719.6,848.5 730.4,862.5 741.5,844.4 751.9,865.2 762.9,870.4 773.8,868.3 784.6,849.6 795.6,867.3 807.1,856.2 817.5,842.3 827.9,838.8 839.4,837.5 850.8,816.2 860.3,812.2 871.1,803.1 882.1,804 893.5,785.2 904.5,777.2 915.3,780.6 926.3,815 937.1,803.1 948.1,784.1 958.4,784.1 969.2,790.9 980.6,782.5 991.6,777.2 1002.4,780.2 1013.2,781.3 1024.2,787 1035.2,797.8 1046.6,828.8 1057.4,863.1 1067.2,868.2 1078,814.5 1089,811.6 1101,849.4 1111.2,870.5 1122.7,875.7 1133.7,879.2 1144.5,869.5 1155.9,869.5 1166.2,870.5 1177.2,862.7 1188,834.5 1198.3,808.1 1208.6,781.8 1220.1,780.6 1231.6,783.4 1242.3,781.8 1253.3,775.6 1264.3,770.3" fill="none" stroke="#cf49b6" stroke-width="1.2"/>
</svg>
<div class="t" style="right:61px;top:149.7px;height:16px;line-height:16px;font-size:12px;color:#8a92a4;font-weight:normal;">130000.00</div>
<div class="t" style="right:61px;top:180.2px;height:16px;line-height:16px;font-size:12px;color:#8a92a4;font-weight:normal;">128000.00</div>
<div class="t" style="right:61px;top:210.7px;height:16px;line-height:16px;font-size:12px;color:#8a92a4;font-weight:normal;">126000.00</div>
<div class="t" style="right:61px;top:241.2px;height:16px;line-height:16px;font-size:12px;color:#8a92a4;font-weight:normal;">124000.00</div>
<div class="t" style="right:61px;top:271.7px;height:16px;line-height:16px;font-size:12px;color:#8a92a4;font-weight:normal;">122000.00</div>
<div class="t" style="right:61px;top:302.2px;height:16px;line-height:16px;font-size:12px;color:#8a92a4;font-weight:normal;">120000.00</div>
<div class="t" style="right:61px;top:332.7px;height:16px;line-height:16px;font-size:12px;color:#8a92a4;font-weight:normal;">118000.00</div>
<div class="t" style="right:61px;top:363.2px;height:16px;line-height:16px;font-size:12px;color:#8a92a4;font-weight:normal;">116000.00</div>
<div class="t" style="right:61px;top:393.7px;height:16px;line-height:16px;font-size:12px;color:#8a92a4;font-weight:normal;">114000.00</div>
<div class="t" style="right:61px;top:424.2px;height:16px;line-height:16px;font-size:12px;color:#8a92a4;font-weight:normal;">112000.00</div>
<div class="t" style="right:61px;top:454.7px;height:16px;line-height:16px;font-size:12px;color:#8a92a4;font-weight:normal;">110000.00</div>
<div class="t" style="right:61px;top:485.2px;height:16px;line-height:16px;font-size:12px;color:#8a92a4;font-weight:normal;">108000.00</div>
<div class="t" style="right:61px;top:515.7px;height:16px;line-height:16px;font-size:12px;color:#8a92a4;font-weight:normal;">106000.00</div>
<div class="t" style="right:61px;top:546.2px;height:16px;line-height:16px;font-size:12px;color:#8a92a4;font-weight:normal;">104000.00</div>
<div class="t" style="right:61px;top:576.7px;height:16px;line-height:16px;font-size:12px;color:#8a92a4;font-weight:normal;">102000.00</div>
<div class="t" style="left:1794px;width:76px;text-align:center;top:616.3px;height:16px;line-height:16px;font-size:12px;color:#8a92a4">2000.00</div>
<div class="t" style="left:1794px;width:76px;text-align:center;top:663.5px;height:16px;line-height:16px;font-size:12px;color:#8a92a4">0.00</div>
<div class="t" style="left:1794px;width:76px;text-align:center;top:711.5px;height:16px;line-height:16px;font-size:12px;color:#8a92a4">-2000.00</div>
<div class="t" style="left:1794px;width:76px;text-align:center;top:769px;height:16px;line-height:16px;font-size:12px;color:#8a92a4">100.00</div>
<div class="t" style="left:1794px;width:76px;text-align:center;top:818px;height:16px;line-height:16px;font-size:12px;color:#8a92a4">50.00</div>
<div class="t" style="left:1794px;width:76px;text-align:center;top:867px;height:16px;line-height:16px;font-size:12px;color:#8a92a4">0.00</div>
<div class="r" style="left:1793px;top:433px;width:77px;height:20px;background:#d03b3c;"></div>
<div class="r" style="left:1791px;top:443px;width:8px;height:1.3px;background:#ffffff;"></div>
<div class="t" style="left:1802px;top:434px;height:18px;line-height:18px;font-size:13px;color:#ffffff;font-weight:bold;letter-spacing:-0.2px">111325.04</div>
<svg style="left:13px;top:10px;" width="16" height="16" viewBox="0 0 16 16"><rect width="16" height="16" fill="#f2f4f6"/><path d="M0 16 V13 L6 10.5 L9 9 L11 5.5 L12.5 7 L14 9 L10 11.5 L5 14 L2 16Z" fill="#3a3a3a"/><path d="M0 16 V14 L4 13 L8 11 L6 14 L3 16Z" fill="#222"/></svg>
<div class="t" style="left:37px;top:9.5px;height:19px;line-height:19px;font-size:14px;color:#e6e6e6;font-weight:normal;">泡沫追逐者</div>
<svg style="left:112px;top:7px;" width="72" height="22" viewBox="0 0 72 22"><path d="M7 0 H72 L65 22 H0Z" fill="#202126"/><path d="M12.5 5.5 H17.5 L20.5 9.5 L15 17 L9.5 9.5Z" fill="#7d818b"/><rect x="12.5" y="8.8" width="5" height="1.5" fill="#202126"/></svg>
<div class="t" style="left:137.5px;top:11px;height:16px;line-height:16px;font-size:12px;color:#7d818b;font-weight:normal;">未开通</div>
<svg style="left:201px;top:15px;" width="5" height="5" viewBox="0 0 5 5"><circle cx="2.5" cy="2.5" r="2.2" fill="#e8403c"/></svg>
<div class="t" style="left:212px;top:10.5px;height:17px;line-height:17px;font-size:12.5px;color:#e6e6e6;font-weight:normal;letter-spacing:-0.3px">打开HTX 注册速抢小米17 Pro!</div>
<div class="r" style="left:1408px;top:4px;width:199px;height:27px;background:#18191d;box-sizing:border-box;border:1px solid #2f3036;border-radius:2px"></div>
<svg style="left:1417px;top:10px;" width="16" height="16" viewBox="0 0 16 16"><circle cx="7" cy="7" r="5.2" fill="none" stroke="#9a9da5" stroke-width="1.5"/><line x1="10.8" y1="10.8" x2="14" y2="14" stroke="#9a9da5" stroke-width="1.6"/></svg>
<div class="t" style="left:1439px;top:11.5px;height:16px;line-height:16px;font-size:12px;color:#7e828c;font-weight:normal;">OKX BTC/USDT 永续</div>
<div class="r" style="left:1583px;top:10px;width:16px;height:16px;background:#2c2d33;border-radius:2px"></div>
<div class="t" style="left:1588px;top:11.5px;height:15px;line-height:15px;font-size:11px;color:#6f727a;font-weight:normal;">/</div>
<svg style="left:1624px;top:8px;" width="20" height="20" viewBox="0 0 20 20"><path d="M4 14 V9 a6 6 0 0 1 12 0 V14 L17.5 15.5 H2.5Z" fill="none" stroke="#c8c8c8" stroke-width="1.6" stroke-linejoin="round"/><path d="M8 17.5 a2 2 0 0 0 4 0" fill="none" stroke="#c8c8c8" stroke-width="1.6"/></svg>
<div class="r" style="left:1660px;top:7px;width:59px;height:22px;background:#0b0b0d;box-sizing:border-box;border:1px solid #1f2025;border-radius:3px"></div>
<div class="t" style="left:1671px;top:10px;height:18px;line-height:18px;font-size:13px;color:#e6e6e6;font-weight:normal;">USD</div>
<svg style="left:1704px;top:16px;" width="8" height="5" viewBox="0 0 8 5"><path d="M0 0 H8 L4 4.5Z" fill="#c8c8c8"/></svg>
<svg style="left:1736px;top:9px;" width="22" height="17" viewBox="0 0 22 17"><rect x="1" y="1" width="20" height="15" fill="none" stroke="#c8c8c8" stroke-width="1.8"/><path d="M1 2 L11 9.5 L21 2" fill="none" stroke="#c8c8c8" stroke-width="1.8"/></svg>
<div class="r" style="left:1788px;top:10px;width:1px;height:16px;background:#3a3b40;"></div>
<svg style="left:1805px;top:9px;" width="17" height="17" viewBox="0 0 17 17"><path d="M1 3 V16 H16 V8" fill="none" stroke="#c8c8c8" stroke-width="1.5"/><path d="M1 3 H9 V16" fill="none" stroke="#c8c8c8" stroke-width="1.5"/><rect x="11" y="1" width="5" height="5" fill="none" stroke="#c8c8c8" stroke-width="1.5"/></svg>
<div class="r" style="left:1836px;top:24px;width:15px;height:1.6px;background:#c8c8c8;"></div>
<svg style="left:1863px;top:10px;" width="16" height="16" viewBox="0 0 16 16"><path d="M1 5 V1 H5 M11 1 H15 V5 M15 11 V15 H11 M5 15 H1 V11" fill="none" stroke="#c8c8c8" stroke-width="1.6"/></svg>
<svg style="left:1891px;top:10px;" width="15" height="15" viewBox="0 0 15 15"><path d="M1 1 L14 14 M14 1 L1 14" stroke="#c8c8c8" stroke-width="1.7"/></svg>
<svg style="left:23px;top:61px;" width="20" height="20" viewBox="0 0 20 20"><circle cx="10" cy="10" r="9" fill="none" stroke="#6a6d75" stroke-width="1.3"/><circle cx="8" cy="11" r="3" fill="none" stroke="#bfc1c6" stroke-width="1.8"/><path d="M14 8 L11.5 11 L14 14" fill="none" stroke="#bfc1c6" stroke-width="1.6"/><circle cx="13" cy="6.5" r="1.3" fill="#e8403c"/></svg>
<div class="t" style="left:0;width:65px;text-align:center;top:85px;height:16px;line-height:16px;font-size:12px;color:#878c99;font-weight:normal">首页</div>
<svg style="left:23px;top:134px;" width="21" height="22" viewBox="0 0 21 22"><rect x="1" y="10" width="5" height="8" fill="#c9cbd0"/><rect x="8" y="1" width="5" height="17" fill="#c9cbd0"/><rect x="15" y="5" width="5" height="13" fill="#c9cbd0"/><rect x="0" y="19" width="21" height="3" fill="#1e80ff"/></svg>
<div class="t" style="left:0;width:65px;text-align:center;top:157px;height:16px;line-height:16px;font-size:12px;color:#1e80ff;font-weight:500">行情</div>
<svg style="left:23px;top:206px;" width="20" height="20" viewBox="0 0 20 20"><rect x="5" y="0" width="15" height="19" rx="1" fill="#5e6169"/><rect x="0" y="5" width="7" height="14" fill="#8a8d94"/><path d="M9 5 H16 L12 10 H16 L10 16 L12 11 H9Z" fill="#2a2b30"/></svg>
<div class="t" style="left:0;width:65px;text-align:center;top:229px;height:16px;line-height:16px;font-size:12px;color:#878c99;font-weight:normal">快讯</div>
<svg style="left:23px;top:278px;" width="20" height="20" viewBox="0 0 20 20"><path d="M0 2 Q0 0 2 0 H9 L14 5 V19 H2 Q0 19 0 17Z" fill="#5e6169"/><rect x="11" y="8" width="9" height="11" rx="1" fill="#8a8d94"/><rect x="3" y="10" width="6" height="2" fill="#2a2b30"/><rect x="3" y="14" width="6" height="2" fill="#2a2b30"/></svg>
<div class="t" style="left:0;width:65px;text-align:center;top:301px;height:16px;line-height:16px;font-size:12px;color:#878c99;font-weight:normal">要闻</div>
<svg style="left:23px;top:350px;" width="20" height="20" viewBox="0 0 20 20"><rect x="9" y="0" width="2" height="4" fill="#5e6169"/><rect x="6" y="0" width="8" height="1.5" fill="#5e6169"/><rect x="2" y="5" width="16" height="14" rx="2" fill="#5e6169"/><rect x="0" y="9" width="2" height="5" fill="#5e6169"/><rect x="18" y="9" width="2" height="5" fill="#5e6169"/><circle cx="7" cy="11" r="1.5" fill="#1a1b1f"/><circle cx="13" cy="11" r="1.5" fill="#1a1b1f"/><path d="M8 14.5 Q10 16 12 14.5" stroke="#1a1b1f" fill="none" stroke-width="1.2"/></svg>
<div class="t" style="left:0;width:65px;text-align:center;top:373px;height:16px;line-height:16px;font-size:12px;color:#878c99;font-weight:normal">策略</div>
<svg style="left:23px;top:422px;" width="20" height="20" viewBox="0 0 20 20"><path d="M0 0 H5 L0 5Z M20 20 H15 L20 15Z" fill="#5e6169"/><circle cx="13" cy="7" r="6" fill="#5e6169"/><circle cx="7.5" cy="13" r="6.5" fill="#4a4d54"/><rect x="4.5" y="12" width="1.5" height="4" fill="#2a2b30"/><rect x="7" y="10" width="1.5" height="6" fill="#2a2b30"/><rect x="9.5" y="13" width="1.5" height="3" fill="#2a2b30"/></svg>
<div class="t" style="left:0;width:65px;text-align:center;top:445px;height:16px;line-height:16px;font-size:12px;color:#878c99;font-weight:normal">Web3</div>
<svg style="left:23px;top:494px;" width="20" height="19" viewBox="0 0 20 19"><path d="M2 5 L15 0 L16 5Z" fill="#8a8d94"/><rect x="0" y="5" width="20" height="14" rx="2" fill="#5e6169"/><rect x="12" y="9" width="6" height="5" fill="#2a2b30"/><circle cx="15" cy="11.5" r="1.2" fill="#5e6169"/></svg>
<div class="t" style="left:0;width:65px;text-align:center;top:517px;height:16px;line-height:16px;font-size:12px;color:#878c99;font-weight:normal">资产</div>
<div class="r" style="left:38px;top:477px;width:29px;height:18px;background:#e23b3b;border-radius:9px"></div>
<div class="t" style="left:42px;top:479px;height:16px;line-height:16px;font-size:11px;color:#ffffff;font-weight:bold;">链上</div>
<div class="r" style="left:66px;top:500px;width:8px;height:38px;background:#2b2c31;border-radius:3px"></div>
<svg style="left:67px;top:514px;" width="6" height="9" viewBox="0 0 6 9"><path d="M1 0 L5 4.5 L1 9Z" fill="#8a8d94"/></svg>
<svg style="left:23px;top:566px;" width="20" height="20" viewBox="0 0 20 20"><path d="M0 2 Q0 0 2 0 H18 Q20 0 20 2 V14 Q20 16 18 16 H6 L2 20 V16 Q0 16 0 14Z" fill="#5e6169"/><path d="M4 5 L10 10 L16 5" stroke="#2a2b30" stroke-width="2" fill="none"/><rect x="3" y="11" width="14" height="3" fill="#8a8d94"/></svg>
<div class="t" style="left:0;width:65px;text-align:center;top:589px;height:16px;line-height:16px;font-size:12px;color:#878c99;font-weight:normal">群聊</div>
<svg style="left:23px;top:638px;" width="20" height="20" viewBox="0 0 20 20"><rect x="0" y="0" width="20" height="20" rx="2" fill="#5e6169"/><circle cx="6" cy="10" r="3" fill="none" stroke="#d0d2d6" stroke-width="1.8"/><path d="M9 10 H17 V13 M14 10 V12.5" stroke="#d0d2d6" stroke-width="1.8" fill="none"/></svg>
<div class="t" style="left:0;width:65px;text-align:center;top:661px;height:16px;line-height:16px;font-size:12px;color:#878c99;font-weight:normal">授权</div>
<svg style="left:23px;top:710px;" width="20" height="20" viewBox="0 0 20 20"><rect x="1" y="1" width="18" height="14" fill="none" stroke="#5e6169" stroke-width="1.8"/><rect x="5" y="8" width="1.8" height="5" fill="#5e6169"/><rect x="9" y="5" width="1.8" height="8" fill="#5e6169"/><rect x="13" y="9" width="1.8" height="4" fill="#5e6169"/><rect x="4" y="17" width="12" height="2" fill="#5e6169"/></svg>
<div class="t" style="left:0;width:65px;text-align:center;top:733px;height:16px;line-height:16px;font-size:12px;color:#878c99;font-weight:normal">数据</div>
<svg style="left:23px;top:782px;" width="20" height="20" viewBox="0 0 20 20"><rect x="0" y="2" width="8" height="8" fill="#5e6169"/><path d="M15 0 L20 5 L15 10 L10 5Z" fill="#5e6169"/><rect x="0" y="12" width="8" height="8" fill="#5e6169"/><rect x="11" y="12" width="8" height="8" fill="#5e6169"/></svg>
<div class="t" style="left:0;width:65px;text-align:center;top:807px;height:16px;line-height:16px;font-size:12px;color:#878c99;font-weight:normal">更多</div>
<svg style="left:42px;top:798px;" width="6" height="6" viewBox="0 0 6 6"><path d="M6 0 V6 H0Z" fill="#44464c"/></svg>
<svg style="left:25px;top:930px;" width="16" height="17" viewBox="0 0 16 17"><path d="M4.5 1 H11.5 L14.8 5.5 L8 15.5 L1.2 5.5Z" fill="none" stroke="#d4a93c" stroke-width="1.3" stroke-linejoin="round"/><line x1="5" y1="6" x2="11" y2="6" stroke="#d4a93c" stroke-width="1.6"/></svg>
<div class="t" style="left:0;width:65px;text-align:center;top:946.5px;height:16px;line-height:16px;font-size:12px;color:#d4a93c;font-weight:normal">VIP</div>
<svg style="left:23px;top:993px;" width="20" height="22" viewBox="0 0 20 22"><path d="M10 1.2 L18 5.8 V15.2 L10 19.8 L2 15.2 V5.8Z" fill="none" stroke="#6a6d75" stroke-width="1.4"/><circle cx="10" cy="10.5" r="3.3" fill="none" stroke="#6a6d75" stroke-width="1.4"/></svg>
<svg style="left:79px;top:42px;" width="15" height="15" viewBox="0 0 15 15"><circle cx="7.5" cy="7.5" r="7.5" fill="#f4f4f4"/><path d="M7.5 2.5 L12.5 7.5 L7.5 12.5 L2.5 7.5Z" fill="#f3ba2f"/><path d="M7.5 5 L10 7.5 L7.5 10 L5 7.5Z" fill="#f4f4f4"/><path d="M7.5 6.3 L8.7 7.5 L7.5 8.7 L6.3 7.5Z" fill="#f3ba2f"/></svg>
<div class="t" style="left:101px;top:39.5px;height:19px;line-height:19px;font-size:14px;color:#e0e0e0;font-weight:normal;letter-spacing:-0.3px">BTC/USDT</div>
<div class="t" style="left:79px;top:58.5px;height:19px;line-height:19px;font-size:14.2px;color:#2bb37a;font-weight:normal;">111325.04&nbsp;&nbsp;1.13%</div>
<div class="r" style="left:126px;top:70px;width:32px;height:14px;background:#f04f25;border-radius:7px 7px 7px 0"></div>
<div class="t" style="left:129px;top:71px;height:14px;line-height:14px;font-size:10px;color:#ffffff;font-weight:bold;">NEW</div>
<svg style="left:245px;top:51px;" width="11" height="11" viewBox="0 0 11 11"><path d="M5.5 0 V11 M0 5.5 H11" stroke="#7a7d85" stroke-width="1.2"/></svg>
<svg style="left:85px;top:86px;" width="12" height="12" viewBox="0 0 12 12"><rect x="0.7" y="0.7" width="10.6" height="10.6" rx="1.5" fill="none" stroke="#a8abb2" stroke-width="1.3"/><path d="M2.5 8 L4.5 5 L6.5 7 L9.5 3.5" fill="none" stroke="#a8abb2" stroke-width="1.2"/></svg>
<div class="t" style="left:102px;top:83.5px;height:19px;line-height:19px;font-size:14px;color:#dcdcdc;font-weight:500;">指标</div>
<svg style="left:147px;top:86px;" width="12" height="12" viewBox="0 0 12 12"><rect x="0.7" y="3" width="10.6" height="8.3" rx="1" fill="none" stroke="#a8abb2" stroke-width="1.3"/><path d="M4 3 V1 H8 V3 M0.7 6.5 H11.3" fill="none" stroke="#a8abb2" stroke-width="1.2"/></svg>
<div class="t" style="left:164px;top:83.5px;height:19px;line-height:19px;font-size:14px;color:#dcdcdc;font-weight:500;">高级</div>
<svg style="left:209px;top:86px;" width="11" height="12" viewBox="0 0 11 12"><rect x="0.6" y="0.6" width="3.5" height="10.8" rx="1" fill="none" stroke="#a8abb2" stroke-width="1.2"/><rect x="6.5" y="0.6" width="3.8" height="4" rx="1" fill="none" stroke="#a8abb2" stroke-width="1.2"/><rect x="6.5" y="7" width="3.8" height="4.4" rx="1" fill="none" stroke="#a8abb2" stroke-width="1.2"/></svg>
<div class="t" style="left:225px;top:83.5px;height:19px;line-height:19px;font-size:14px;color:#dcdcdc;font-weight:500;">多窗</div>
<svg style="left:268px;top:85px;" width="14" height="14" viewBox="0 0 14 14"><path d="M6.5 1.5 L1.5 7 L6.5 12.5Z M12.5 1.5 L7.5 7 L12.5 12.5Z" fill="none" stroke="#a8abb2" stroke-width="1.2" stroke-linejoin="round"/></svg>
<div class="t" style="left:286px;top:83.5px;height:19px;line-height:19px;font-size:14px;color:#dcdcdc;font-weight:500;">复盘</div>
<svg style="left:328px;top:85px;" width="14" height="14" viewBox="0 0 14 14"><path d="M2 2 V12 M7 0 V14 M12 2 V12" stroke="#a8abb2" stroke-width="1"/><rect x="0.7" y="4" width="2.6" height="6" fill="none" stroke="#a8abb2" stroke-width="1.2"/><rect x="5.7" y="3" width="2.6" height="8" fill="none" stroke="#a8abb2" stroke-width="1.2"/><rect x="10.7" y="4" width="2.6" height="6" fill="none" stroke="#a8abb2" stroke-width="1.2"/></svg>
<svg style="left:350px;top:89px;" width="9" height="6" viewBox="0 0 9 6"><path d="M0.5 0.5 L4.5 4.8 L8.5 0.5" fill="none" stroke="#a8abb2" stroke-width="1.2"/></svg>
<div class="t" style="left:373px;top:83.5px;height:19px;line-height:19px;font-size:14px;color:#dcdcdc;font-weight:500;">周期</div>
<svg style="left:406px;top:89px;" width="9" height="6" viewBox="0 0 9 6"><path d="M0.5 0.5 L4.5 4.8 L8.5 0.5" fill="none" stroke="#a8abb2" stroke-width="1.2"/></svg>
<div class="t" style="left:432px;top:84px;height:18px;line-height:18px;font-size:13px;color:#dcdcdc;font-weight:normal;">15分</div>
<div class="t" style="left:471px;top:84px;height:18px;line-height:18px;font-size:13px;color:#dcdcdc;font-weight:normal;">45分</div>
<div class="t" style="left:511px;top:84px;height:18px;line-height:18px;font-size:13px;color:#1e80ff;font-weight:normal;">4时</div>
<div class="t" style="left:543px;top:84px;height:18px;line-height:18px;font-size:13px;color:#dcdcdc;font-weight:normal;">8时</div>
<div class="t" style="left:576px;top:84px;height:18px;line-height:18px;font-size:13px;color:#dcdcdc;font-weight:normal;">1日</div>
<div class="t" style="left:609px;top:84px;height:18px;line-height:18px;font-size:13px;color:#dcdcdc;font-weight:normal;">1秒</div>
<div class="t" style="left:641px;top:84px;height:18px;line-height:18px;font-size:13px;color:#dcdcdc;font-weight:normal;">30秒</div>
<div class="t" style="left:680px;top:84px;height:18px;line-height:18px;font-size:13px;color:#dcdcdc;font-weight:normal;">分时</div>
<div class="t" style="left:719px;top:84px;height:18px;line-height:18px;font-size:13px;color:#dcdcdc;font-weight:normal;">1分</div>
<div class="t" style="left:751px;top:84px;height:18px;line-height:18px;font-size:13px;color:#dcdcdc;font-weight:normal;">5分</div>
<div class="t" style="left:783px;top:84px;height:18px;line-height:18px;font-size:13px;color:#dcdcdc;font-weight:normal;">10分</div>
<div class="t" style="left:823px;top:84px;height:18px;line-height:18px;font-size:13px;color:#dcdcdc;font-weight:normal;">30分</div>
<div class="t" style="left:863px;top:84px;height:18px;line-height:18px;font-size:13px;color:#dcdcdc;font-weight:normal;">1时</div>
<div class="t" style="left:896px;top:84px;height:18px;line-height:18px;font-size:13px;color:#dcdcdc;font-weight:normal;">2时</div>
<div class="t" style="left:927px;top:84px;height:18px;line-height:18px;font-size:13px;color:#dcdcdc;font-weight:normal;">3时</div>
<div class="t" style="left:961px;top:84px;height:18px;line-height:18px;font-size:13px;color:#dcdcdc;font-weight:normal;">12时</div>
<div class="t" style="left:1000px;top:84px;height:18px;line-height:18px;font-size:13px;color:#dcdcdc;font-weight:normal;">2日</div>
<div class="t" style="left:1032px;top:84px;height:18px;line-height:18px;font-size:13px;color:#dcdcdc;font-weight:normal;">3日</div>
<div class="t" style="left:1065px;top:84px;height:18px;line-height:18px;font-size:13px;color:#dcdcdc;font-weight:normal;">周K</div>
<div class="t" style="left:1099px;top:84px;height:18px;line-height:18px;font-size:13px;color:#dcdcdc;font-weight:normal;">15日</div>
<div class="t" style="left:1139px;top:84px;height:18px;line-height:18px;font-size:13px;color:#dcdcdc;font-weight:normal;">月K</div>
<div class="t" style="left:1172px;top:84px;height:18px;line-height:18px;font-size:13px;color:#dcdcdc;font-weight:normal;">季K</div>
<div class="t" style="left:1207px;top:84px;height:18px;line-height:18px;font-size:13px;color:#dcdcdc;font-weight:normal;">年K</div>
<div class="t" style="left:1467px;top:84px;height:18px;line-height:18px;font-size:13px;color:#dcdcdc;font-weight:normal;">1s</div>
<svg style="left:1493px;top:85px;" width="15" height="13" viewBox="0 0 15 13"><rect x="0.7" y="3" width="13.6" height="9.3" rx="1" fill="none" stroke="#7f828a" stroke-width="1.3"/><circle cx="7.5" cy="7.5" r="2.5" fill="none" stroke="#7f828a" stroke-width="1.3"/><path d="M4.5 3 L5.5 1 H9.5 L10.5 3" fill="none" stroke="#7f828a" stroke-width="1.2"/></svg>
<svg style="left:1523px;top:85px;" width="15" height="15" viewBox="0 0 15 15"><path d="M2 10 L10 2 L13 5 L5 13 H2Z" fill="none" stroke="#1e80ff" stroke-width="1.4"/><path d="M1 14.3 H14" stroke="#1e80ff" stroke-width="1.3"/></svg>
<svg style="left:1554px;top:85px;" width="14" height="14" viewBox="0 0 14 14"><path d="M4 4 V1 H13 V10 H10" fill="none" stroke="#7f828a" stroke-width="1.3"/><path d="M1 10 H7 M4 7 V13" stroke="#7f828a" stroke-width="1.3"/></svg>
<svg style="left:1585px;top:86px;" width="13" height="12" viewBox="0 0 13 12"><path d="M0 1 H2 M4 1 H13 M0 6 H2 M4 6 H13 M0 11 H2 M4 11 H10" stroke="#7f828a" stroke-width="1.3"/></svg>
<div class="t" style="left:1607px;top:83.5px;height:19px;line-height:19px;font-size:14px;color:#e6e6e6;font-weight:500;">显示</div>
<svg style="left:1643px;top:85px;" width="14" height="15" viewBox="0 0 14 15"><path d="M7 0.8 L13 4.2 V10.8 L7 14.2 L1 10.8 V4.2Z" fill="none" stroke="#7f828a" stroke-width="1.3"/><circle cx="7" cy="7.5" r="2.3" fill="none" stroke="#7f828a" stroke-width="1.3"/></svg>
<svg style="left:1673px;top:86px;" width="13" height="13" viewBox="0 0 13 13"><path d="M0.7 4 V0.7 H4 M9 0.7 H12.3 V4 M12.3 9 V12.3 H9 M4 12.3 H0.7 V9 M3 3 L5 5 M10 3 L8 5 M10 10 L8 8 M3 10 L5 8" fill="none" stroke="#7f828a" stroke-width="1.2"/></svg>
<div class="r" style="left:1695px;top:77px;width:1px;height:31px;background:#25262b;"></div>
<svg style="left:1703px;top:86px;" width="17" height="12" viewBox="0 0 17 12"><path d="M4.5 11 H13 a3.5 3.5 0 0 0 0.5 -7 a5 5 0 0 0 -9.5 1 a3 3 0 0 0 0.5 6Z" fill="none" stroke="#7f828a" stroke-width="1.3"/><path d="M6 7 L8 9 L11.5 5.5" fill="none" stroke="#7f828a" stroke-width="1.2"/></svg>
<div class="t" style="left:1722px;top:84px;height:18px;line-height:18px;font-size:13px;color:#e6e6e6;font-weight:normal;">未命名</div>
<svg style="left:1763px;top:89px;" width="9" height="6" viewBox="0 0 9 6"><path d="M0.5 0.5 L4.5 4.8 L8.5 0.5" fill="none" stroke="#7f828a" stroke-width="1.2"/></svg>
<svg style="left:1783px;top:83px;" width="54" height="20" viewBox="0 0 54 20"><defs><linearGradient id="ag" x1="0" x2="1" y1="0" y2="0"><stop offset="0" stop-color="#1ec8b4"/><stop offset="0.5" stop-color="#4f6cf6"/><stop offset="1" stop-color="#d94cf2"/></linearGradient></defs><path d="M8 0 H54 V13 Q54 20 47 20 H0 V8 Q0 0 8 0Z" fill="url(#ag)"/></svg>
<div class="t" style="left:1791px;top:84px;height:18px;line-height:18px;font-size:13.5px;color:#ffffff;font-weight:normal;">AI解读</div>
<svg style="left:1845px;top:85px;" width="14" height="15" viewBox="0 0 14 15"><circle cx="11" cy="3" r="2.2" fill="none" stroke="#1e80ff" stroke-width="1.4"/><circle cx="3" cy="7.5" r="2.2" fill="none" stroke="#1e80ff" stroke-width="1.4"/><circle cx="11" cy="12" r="2.2" fill="none" stroke="#1e80ff" stroke-width="1.4"/><path d="M5 6.3 L9 4.2 M5 8.7 L9 10.8" stroke="#1e80ff" stroke-width="1.3"/></svg>
<svg style="left:85px;top:118px;" width="14" height="14" viewBox="0 0 14 14"><path d="M1.5 12.5 L12.5 1.5 M0 11 L3 14 M11 0 L14 3" stroke="#9a9da5" stroke-width="1.3"/></svg>
<svg style="left:115px;top:118px;" width="17" height="14" viewBox="0 0 17 14"><path d="M0 2 H17 M0 7 H17 M0 12 H17" stroke="#9a9da5" stroke-width="1.3"/><circle cx="8.5" cy="2" r="1.3" fill="#9a9da5"/><circle cx="8.5" cy="12" r="1.3" fill="#9a9da5"/></svg>
<svg style="left:147px;top:118px;" width="17" height="14" viewBox="0 0 17 14"><path d="M0 2 H17 M0 7 H17 M0 12 H17 M0.7 0.5 V3.5 M16.3 10.5 V13.5" stroke="#9a9da5" stroke-width="1.3"/></svg>
<svg style="left:179px;top:121px;" width="17" height="8" viewBox="0 0 17 8"><path d="M0 4 H17 M7 1 V7" stroke="#9a9da5" stroke-width="1.4"/></svg>
<svg style="left:212px;top:118px;" width="17" height="15" viewBox="0 0 17 15"><rect x="0.8" y="0.8" width="15.4" height="13.4" rx="1" fill="none" stroke="#9a9da5" stroke-width="1.5"/></svg>
<svg style="left:245px;top:124px;" width="13" height="4" viewBox="0 0 13 4"><circle cx="1.7" cy="2" r="1.5" fill="#9a9da5"/><circle cx="6.5" cy="2" r="1.5" fill="#9a9da5"/><circle cx="11.3" cy="2" r="1.5" fill="#9a9da5"/></svg>
<svg style="left:262px;top:116px;" width="6" height="6" viewBox="0 0 6 6"><circle cx="3" cy="3" r="3" fill="#f0522c"/></svg>
<div class="r" style="left:275px;top:119px;width:1px;height:13px;background:#3a2a1a;"></div>
<div class="t" style="left:289px;top:115px;height:22px;line-height:22px;font-size:16px;color:#d0a83a;font-weight:normal;">主</div>
<div class="t" style="left:321px;top:115px;height:22px;line-height:22px;font-size:16px;color:#d0a83a;font-weight:normal;">大</div>
<div class="t" style="left:354px;top:115px;height:22px;line-height:22px;font-size:16px;color:#d0a83a;font-weight:normal;">筹</div>
<svg style="left:385px;top:116px;" width="17" height="18" viewBox="0 0 17 18"><path d="M4 3 H2.5 Q1 3 1 4.5 V13.5 Q1 15 2.5 15 H6 M11 3 H14.5 Q16 3 16 4.5 V13.5 Q16 15 14.5 15 H13" fill="none" stroke="#9a9da5" stroke-width="1.3"/><path d="M9 1 L11 3 L9 5 M8 13 L6 15 L8 17" fill="none" stroke="#9a9da5" stroke-width="1.2"/><path d="M5.5 11.5 L10 7 L11.5 8.5 L7 13 H5.5Z M5 13.5 H12" fill="none" stroke="#9a9da5" stroke-width="1.1"/></svg>
<svg style="left:418px;top:117px;" width="17" height="16" viewBox="0 0 17 16"><path d="M1 15 L14 1" stroke="#9a9da5" stroke-width="1.3"/><circle cx="4" cy="12" r="1.2" fill="#9a9da5"/><circle cx="9" cy="6.5" r="1.2" fill="#9a9da5"/><path d="M9 11 H12 L14 9 L16 11 L14 13 H9Z" fill="#707379"/></svg>
<div class="r" style="left:449px;top:119px;width:1px;height:13px;background:#2e2f35;"></div>
<svg style="left:465px;top:117px;" width="16" height="16" viewBox="0 0 16 16"><path d="M1 1 H4 M1 1 V15" stroke="#1e80ff" stroke-width="1.6"/><path d="M5 4 H15 V15 L10 11.5 L5 15Z" fill="none" stroke="#1e80ff" stroke-width="1.5" stroke-linejoin="round"/></svg>
<svg style="left:497px;top:117px;" width="16" height="16" viewBox="0 0 16 16"><path d="M1 11 L11 1 L15 5 L5 15Z" fill="none" stroke="#9a9da5" stroke-width="1.3"/><path d="M4 8 L6 10 M7 5 L9 7 M10 2 L12 4" stroke="#9a9da5" stroke-width="1.1"/></svg>
<svg style="left:528px;top:117px;" width="17" height="16" viewBox="0 0 17 16"><path d="M3 13 L1 10 L10 1 L14 5 L6 13Z" fill="none" stroke="#9a9da5" stroke-width="1.3"/><path d="M9 13 H16" stroke="#9a9da5" stroke-width="1.3"/></svg>
<svg style="left:561px;top:117px;" width="17" height="16" viewBox="0 0 17 16"><path d="M3 0 V16 M8.5 0 V16 M14 0 V16" stroke="#9a9da5" stroke-width="1.1"/><rect x="1.2" y="4" width="3.6" height="8" fill="#111215" stroke="#9a9da5" stroke-width="1.2"/><rect x="6.7" y="3" width="3.6" height="8" fill="#111215" stroke="#9a9da5" stroke-width="1.2"/><rect x="12.2" y="5" width="3.6" height="7" fill="#111215" stroke="#9a9da5" stroke-width="1.2"/></svg>
<svg style="left:593px;top:116px;" width="16" height="17" viewBox="0 0 16 17"><rect x="1" y="7" width="14" height="9" rx="1" fill="none" stroke="#9a9da5" stroke-width="1.3"/><path d="M4.5 7 V4 a3.5 3.5 0 0 1 7 0" fill="none" stroke="#9a9da5" stroke-width="1.3"/><path d="M8 10 V13" stroke="#9a9da5" stroke-width="1.3"/></svg>
<svg style="left:624px;top:117px;" width="17" height="16" viewBox="0 0 17 16"><rect x="0.7" y="1" width="13" height="13" rx="1" fill="none" stroke="#9a9da5" stroke-width="1.3"/><path d="M3 5 H10 M3 8.5 H7" stroke="#9a9da5" stroke-width="1.2"/><path d="M9 13 L15 7 L16.5 8.5 L10.5 14.5Z" fill="#111215" stroke="#9a9da5" stroke-width="1.2"/></svg>
<svg style="left:656px;top:116px;" width="18" height="18" viewBox="0 0 18 18"><g transform="rotate(45 9 9)"><path d="M4 3 V10 a5 5 0 0 0 10 0 V3 H10.5 V10 a1.5 1.5 0 0 1 -3 0 V3Z" fill="none" stroke="#9a9da5" stroke-width="1.3" stroke-linejoin="round"/><path d="M4 6 H7.5 M10.5 6 H14" stroke="#9a9da5" stroke-width="1.2"/></g></svg>
<svg style="left:689px;top:117px;" width="16" height="16" viewBox="0 0 16 16"><path d="M1 1 H15 L9.5 8 V15 L6.5 13 V8Z" fill="none" stroke="#9a9da5" stroke-width="1.3" stroke-linejoin="round"/></svg>
<svg style="left:721px;top:116px;" width="16" height="17" viewBox="0 0 16 17"><path d="M1 3 H15 M5.5 3 V1 H10.5 V3" fill="none" stroke="#9a9da5" stroke-width="1.3"/><rect x="3" y="4.5" width="10" height="11.5" rx="1" fill="none" stroke="#9a9da5" stroke-width="1.3"/><path d="M6.5 7 V13 M9.5 7 V13" stroke="#9a9da5" stroke-width="1.2"/></svg>
<svg style="left:752px;top:118px;" width="16" height="12" viewBox="0 0 16 12"><path d="M5 1 L1 5 L5 9 M1 5 H10 a5 5 0 0 1 5 5 V11" fill="none" stroke="#9a9da5" stroke-width="1.3"/></svg>
<svg style="left:785px;top:118px;" width="16" height="12" viewBox="0 0 16 12"><path d="M11 1 L15 5 L11 9 M15 5 H6 a5 5 0 0 0 -5 5 V11" fill="none" stroke="#44464c" stroke-width="1.3"/></svg>
<svg style="left:1887px;top:55px;" width="18" height="17" viewBox="0 0 18 17"><rect x="0.7" y="0.7" width="4.6" height="6" rx="1" fill="none" stroke="#7d8089" stroke-width="1.4"/><rect x="0.7" y="10" width="4.6" height="6" rx="1" fill="none" stroke="#7d8089" stroke-width="1.4"/><path d="M8 2 H18 M8 6 H18 M8 11 H18 M8 15 H18" stroke="#7d8089" stroke-width="1.4"/></svg>
<svg style="left:1889px;top:111px;" width="15" height="18" viewBox="0 0 15 18"><rect x="0.7" y="0.7" width="13.6" height="16.6" rx="1.5" fill="none" stroke="#7d8089" stroke-width="1.4"/><path d="M4 5 H11 M4 8.5 H11 M4 12 H8" stroke="#7d8089" stroke-width="1.3"/></svg>
<svg style="left:1888px;top:167px;" width="17" height="18" viewBox="0 0 17 18"><path d="M4 1 H16 V15 H4Z" fill="none" stroke="#7d8089" stroke-width="1.4"/><path d="M4 11 H1 V15 Q1 17 3 17 H16" fill="none" stroke="#7d8089" stroke-width="1.4"/><text x="10" y="12" font-size="10" font-weight="bold" fill="#7d8089" text-anchor="middle" font-family="Liberation Sans">$</text></svg>
<svg style="left:1888px;top:222px;" width="18" height="18" viewBox="0 0 18 18"><path d="M1 17 V13 M5 17 V10 M9 17 V8 M13 17 V6" stroke="#7d8089" stroke-width="1.6"/><path d="M1 10 L13 2 M10 1.5 H14 V5.5" fill="none" stroke="#7d8089" stroke-width="1.4"/></svg>
<svg style="left:1887px;top:279px;" width="18" height="18" viewBox="0 0 18 18"><rect x="0.7" y="0.7" width="16.6" height="13" fill="none" stroke="#7d8089" stroke-width="1.4"/><path d="M5 10 V7 M9 10 V4 M13 10 V6 M3 17 H15" stroke="#7d8089" stroke-width="1.5"/></svg>
<svg style="left:1887px;top:335px;" width="19" height="17" viewBox="0 0 19 17"><rect x="3" y="0.7" width="15.3" height="12" fill="none" stroke="#7d8089" stroke-width="1.3"/><rect x="0.7" y="3.5" width="15.3" height="12.8" fill="#121316" stroke="#7d8089" stroke-width="1.3"/><text x="8.3" y="13" font-size="6.5" fill="#7d8089" text-anchor="middle" font-family="Liberation Sans" font-weight="bold">ETF</text></svg>
<svg style="left:1886px;top:390px;" width="20" height="19" viewBox="0 0 20 19"><rect x="1" y="6" width="18" height="12" rx="2.5" fill="none" stroke="#7d8089" stroke-width="1.5"/><circle cx="10" cy="2.5" r="2.2" fill="#e8553a"/><path d="M10 4.5 V6" stroke="#7d8089" stroke-width="1.3"/><circle cx="6.5" cy="12" r="1.5" fill="#7d8089"/><circle cx="13.5" cy="12" r="1.5" fill="#7d8089"/></svg>
<div class="r" style="left:1875px;top:430px;width:45px;height:1px;background:#25262b;"></div>
<svg style="left:1886px;top:453px;" width="20" height="20" viewBox="0 0 20 20"><circle cx="10" cy="10" r="9" fill="none" stroke="#7d8089" stroke-width="1.4"/><path d="M5 8 H15 L12 5.5 M15 12 H5 L8 14.5" fill="none" stroke="#7d8089" stroke-width="1.3"/></svg>
<div class="r" style="left:1867px;top:500px;width:7px;height:38px;background:#2b2c31;border-radius:3px"></div>
<svg style="left:1868px;top:514px;" width="5" height="9" viewBox="0 0 5 9"><path d="M4 0 L0.5 4.5 L4 9Z" fill="#8a8d94"/></svg>
<svg style="left:1888px;top:840px;" width="18" height="18" viewBox="0 0 18 18"><rect x="0.7" y="0.7" width="16.6" height="16.6" rx="1" fill="none" stroke="#7d8089" stroke-width="1.4"/><path d="M0.7 5.5 H17.3 M6 5.5 V17.3" stroke="#7d8089" stroke-width="1.4"/></svg>
<svg style="left:1887px;top:897px;" width="19" height="18" viewBox="0 0 19 18"><path d="M2 12 V9 a7.5 7.5 0 0 1 15 0 V12" fill="none" stroke="#7d8089" stroke-width="1.8"/><rect x="0.5" y="10" width="3.5" height="6" rx="1" fill="#7d8089"/><rect x="15" y="10" width="3.5" height="6" rx="1" fill="#7d8089"/></svg>
<svg style="left:1883px;top:950px;" width="27" height="26" viewBox="0 0 27 26"><path d="M3 4 L7 8 M24 4 L20 8" stroke="#e8e8f0" stroke-width="2.5"/><ellipse cx="13.5" cy="14" rx="12" ry="10.5" fill="#eef0f6"/><rect x="4.5" y="8.5" width="18" height="11" rx="5.5" fill="#2d2f6a"/><circle cx="9.5" cy="14" r="2.2" fill="#ffffff"/><circle cx="17.5" cy="14" r="2.2" fill="#ffffff"/><path d="M5 23 Q13.5 27 22 23" stroke="#c9a8ff" stroke-width="1.5" fill="none"/></svg>
<svg style="left:81px;top:144px;" width="16" height="16" viewBox="0 0 16 16"><circle cx="8" cy="8" r="7.2" fill="none" stroke="#5a5d65" stroke-width="1.1"/><path d="M6.5 5 L9.5 8 L6.5 11" fill="none" stroke="#8a8d94" stroke-width="1.1"/></svg>
<svg style="left:81px;top:162px;" width="16" height="16" viewBox="0 0 16 16"><circle cx="8" cy="8" r="7.2" fill="none" stroke="#5a5d65" stroke-width="1.1"/><path d="M5 6.5 L8 9.5 L11 6.5" fill="none" stroke="#8a8d94" stroke-width="1.1"/></svg>
<div class="t" style="left:103px;top:162px;height:16px;line-height:16px;font-size:12px;color:#a8aab0;font-weight:normal;">自定义TD指标策略_副本</div>
<div class="t" style="left:240px;top:162px;height:16px;line-height:16px;font-size:12px;color:#e8141e;font-weight:normal;">TD超买:1.00</div>
<div class="t" style="left:103px;top:180px;height:16px;line-height:16px;font-size:12px;color:#a8aab0;font-weight:normal;">超级波段追踪多头策略_副本</div>
<svg style="left:103px;top:199px;" width="11" height="12" viewBox="0 0 11 12"><path d="M2 8.5 V5.5 a3.5 3.5 0 0 1 7 0 V8.5 L10 9.5 H1Z" fill="none" stroke="#7a7d85" stroke-width="1.1"/><path d="M4.5 10.5 a1 1 0 0 0 2 0" stroke="#7a7d85" fill="none"/></svg>
<div class="t" style="left:117px;top:198px;height:16px;line-height:16px;font-size:12px;color:#7a7d85;font-weight:normal;">BOLL(20,2)</div>
<div class="t" style="left:186px;top:198px;height:16px;line-height:16px;font-size:12px;color:#d4d4d4;font-weight:normal;">BOLL:109401.17</div>
<div class="t" style="left:280px;top:198px;height:16px;line-height:16px;font-size:12px;color:#e6d63a;font-weight:bold;">UB:112501.62</div>
<div class="t" style="left:361px;top:198px;height:16px;line-height:16px;font-size:12px;color:#d24cba;font-weight:normal;">LB:106300.72</div>
<svg style="left:112px;top:212px;" width="10" height="9" viewBox="0 0 10 9"><path d="M1 4.5 H9 M4.5 1 L1 4.5 L4.5 8" fill="none" stroke="#ffffff" stroke-width="1.3"/></svg>
<div class="t" style="left:124px;top:208px;height:14px;line-height:14px;font-size:12.5px;color:#ffffff;font-weight:normal;letter-spacing:-0.3px">126199.63</div>
<svg style="left:384px;top:580px;" width="7" height="9" viewBox="0 0 7 9"><path d="M5.5 1 L1.5 4.5 L5.5 8" fill="none" stroke="#c8c8c8" stroke-width="1.2"/></svg>
<div class="t" style="left:397px;top:577px;height:14px;line-height:14px;font-size:12.5px;color:#ffffff;font-weight:normal;letter-spacing:-0.3px">102000.00</div>
<div class="t" style="right:1547px;top:208.5px;height:16px;line-height:16px;font-size:12px;color:#1e86f0;font-weight:normal;">0.0%(126190.41)</div>
<div class="t" style="right:1547px;top:295.5px;height:16px;line-height:16px;font-size:12px;color:#1e86f0;font-weight:normal;">23.6%(120481.47)</div>
<div class="t" style="right:1547px;top:349.5px;height:16px;line-height:16px;font-size:12px;color:#1e86f0;font-weight:normal;">38.2%(116949.67)</div>
<div class="t" style="right:1547px;top:392.5px;height:16px;line-height:16px;font-size:12px;color:#1e86f0;font-weight:normal;">50.0%(114095.20)</div>
<div class="t" style="right:1547px;top:436px;height:16px;line-height:16px;font-size:12px;color:#1e86f0;font-weight:normal;">61.8%(111240.74)</div>
<div class="t" style="right:1547px;top:498px;height:16px;line-height:16px;font-size:12px;color:#1e86f0;font-weight:normal;">78.6%(107176.75)</div>
<div class="t" style="right:1547px;top:577px;height:16px;line-height:16px;font-size:12px;color:#1e86f0;font-weight:normal;">100.0%(102000.00)</div>
<div class="t" style="left:1010px;top:411.5px;height:19px;line-height:19px;font-size:14px;color:#f01e1e;font-weight:500;">超买</div>
<div class="t" style="left:1250px;top:410.5px;height:19px;line-height:19px;font-size:14px;color:#f01e1e;font-weight:500;">超买</div>
<svg style="left:81px;top:609px;" width="16" height="16" viewBox="0 0 16 16"><circle cx="8" cy="8" r="7.2" fill="none" stroke="#5a5d65" stroke-width="1.1"/><path d="M5 6.5 L8 9.5 L11 6.5" fill="none" stroke="#8a8d94" stroke-width="1.1"/></svg>
<svg style="left:103px;top:611px;" width="11" height="12" viewBox="0 0 11 12"><path d="M2 8.5 V5.5 a3.5 3.5 0 0 1 7 0 V8.5 L10 9.5 H1Z" fill="none" stroke="#7a7d85" stroke-width="1.1"/><path d="M4.5 10.5 a1 1 0 0 0 2 0" stroke="#7a7d85" fill="none"/></svg>
<div class="t" style="left:117px;top:610px;height:16px;line-height:16px;font-size:12px;color:#7a7d85;font-weight:normal;">MACD(12,26,9)</div>
<div class="t" style="left:203px;top:610px;height:16px;line-height:16px;font-size:12px;color:#d4d4d4;font-weight:bold;">DIF:389.62</div>
<div class="t" style="left:267px;top:610px;height:16px;line-height:16px;font-size:12px;color:#e6d63a;font-weight:bold;">DEA:103.69</div>
<div class="t" style="left:335px;top:610px;height:16px;line-height:16px;font-size:12px;color:#d9484a;font-weight:normal;">MACD:571.85</div>
<svg style="left:81px;top:750px;" width="16" height="16" viewBox="0 0 16 16"><circle cx="8" cy="8" r="7.2" fill="none" stroke="#5a5d65" stroke-width="1.1"/><path d="M5 6.5 L8 9.5 L11 6.5" fill="none" stroke="#8a8d94" stroke-width="1.1"/></svg>
<svg style="left:103px;top:752px;" width="11" height="12" viewBox="0 0 11 12"><path d="M2 8.5 V5.5 a3.5 3.5 0 0 1 7 0 V8.5 L10 9.5 H1Z" fill="none" stroke="#7a7d85" stroke-width="1.1"/><path d="M4.5 10.5 a1 1 0 0 0 2 0" stroke="#7a7d85" fill="none"/></svg>
<div class="t" style="left:117px;top:751px;height:16px;line-height:16px;font-size:12px;color:#7a7d85;font-weight:normal;">KDJ(9,3,3)</div>
<div class="t" style="left:178px;top:751px;height:16px;line-height:16px;font-size:12px;color:#d4d4d4;font-weight:bold;">K:83.93</div>
<div class="t" style="left:224px;top:751px;height:16px;line-height:16px;font-size:12px;color:#e6d63a;font-weight:bold;">D:72.38</div>
<div class="t" style="left:272px;top:751px;height:16px;line-height:16px;font-size:12px;color:#d24cba;font-weight:normal;">J:107.03</div>
<svg style="left:80px;top:853px;" width="22" height="20" viewBox="0 0 22 20"><path d="M11.5 13.5 H6.5 A5 5 0 1 1 11.5 8.5 Z" fill="none" stroke="#ffffff" stroke-width="2.6" stroke-linejoin="round"/><path d="M18.5 6.5 Q14 9 14.3 13 Q14.7 16.5 18.5 18" fill="none" stroke="#ffffff" stroke-width="2.4" stroke-linecap="round"/><circle cx="14.8" cy="3.8" r="1.9" fill="#e0301e"/></svg>
<div class="t" style="left:105px;top:852px;height:25px;line-height:25px;font-size:18px;color:#ffffff;font-weight:bold;letter-spacing:-0.2px">AiCoin</div>
<div class="t" style="left:199px;width:80px;text-align:center;top:887px;height:16px;line-height:16px;font-size:12px;color:#8a92a4">10月 9</div>
<div class="t" style="left:329.8px;width:80px;text-align:center;top:887px;height:16px;line-height:16px;font-size:12px;color:#8a92a4">10月 11</div>
<div class="t" style="left:460.6px;width:80px;text-align:center;top:887px;height:16px;line-height:16px;font-size:12px;color:#8a92a4">10月 13</div>
<div class="t" style="left:591.4px;width:80px;text-align:center;top:887px;height:16px;line-height:16px;font-size:12px;color:#8a92a4">10月 15</div>
<div class="t" style="left:722.2px;width:80px;text-align:center;top:887px;height:16px;line-height:16px;font-size:12px;color:#8a92a4">10月 17</div>
<div class="t" style="left:853px;width:80px;text-align:center;top:887px;height:16px;line-height:16px;font-size:12px;color:#8a92a4">10月 19</div>
<div class="t" style="left:983.8px;width:80px;text-align:center;top:887px;height:16px;line-height:16px;font-size:12px;color:#8a92a4">10月 21</div>
<div class="t" style="left:1114.6px;width:80px;text-align:center;top:887px;height:16px;line-height:16px;font-size:12px;color:#8a92a4">10月 23</div>
<div class="t" style="left:1245.4px;width:80px;text-align:center;top:887px;height:16px;line-height:16px;font-size:12px;color:#8a92a4">10月 25</div>
<div class="t" style="left:1376.2px;width:80px;text-align:center;top:887px;height:16px;line-height:16px;font-size:12px;color:#8a92a4">10月 27</div>
<div class="t" style="left:1507px;width:80px;text-align:center;top:887px;height:16px;line-height:16px;font-size:12px;color:#8a92a4">10月 29</div>
<div class="t" style="left:1637.8px;width:80px;text-align:center;top:887px;height:16px;line-height:16px;font-size:12px;color:#8a92a4">10月 31</div>
<div class="t" style="left:1832px;top:887px;height:18px;line-height:18px;font-size:13px;color:#8a8d94;font-weight:normal;">筹</div>
<div class="t" style="left:1853px;top:887px;height:18px;line-height:18px;font-size:13px;color:#8a8d94;font-weight:normal;">爆</div>
<div class="r" style="left:70px;top:907px;width:1802px;height:1px;background:#000000;"></div>
<svg style="left:86px;top:916px;" width="17" height="16" viewBox="0 0 17 16"><path d="M3 4 V1 M9 4 V1 M1 3 H15 V14 H8" fill="none" stroke="#a8abb2" stroke-width="1.3"/><path d="M1 6 V9 M1 11 H7 M5 9 L7 11 L5 13" fill="none" stroke="#a8abb2" stroke-width="1.3"/></svg>
<div class="t" style="left:110px;top:916px;height:18px;line-height:18px;font-size:13px;color:#e6e6e6;font-weight:bold;">定位到...</div>
<div class="r" style="left:171px;top:910px;width:1px;height:28px;background:#2a2b30;"></div>
<div class="t" style="left:191px;top:916px;height:18px;line-height:18px;font-size:13px;color:#e6e6e6;font-weight:bold;">日期范围</div>
<svg style="left:248px;top:922px;" width="6" height="4" viewBox="0 0 6 4"><path d="M0.5 0.5 L3 3 L5.5 0.5" fill="none" stroke="#6a6d75" stroke-width="1"/></svg>
<div class="r" style="left:273px;top:910px;width:1px;height:28px;background:#2a2b30;"></div>
<div class="t" style="left:294px;top:916px;height:18px;line-height:18px;font-size:13px;color:#7d818b;font-weight:normal;">MA</div>
<div class="t" style="left:342px;top:916px;height:18px;line-height:18px;font-size:13px;color:#7d818b;font-weight:normal;">EMA</div>
<div class="t" style="left:398px;top:916px;height:18px;line-height:18px;font-size:13px;color:#1e80ff;font-weight:normal;">BOLL</div>
<div class="r" style="left:463px;top:910px;width:1px;height:28px;background:#2a2b30;"></div>
<div class="t" style="left:482px;top:916px;height:18px;line-height:18px;font-size:13px;color:#1e80ff;font-weight:normal;">MACD</div>
<div class="t" style="left:548px;top:916px;height:18px;line-height:18px;font-size:13px;color:#7d818b;font-weight:normal;">RSI</div>
<div class="t" style="left:595px;top:916px;height:18px;line-height:18px;font-size:13px;color:#1e80ff;font-weight:normal;">KDJ</div>
<svg style="left:647px;top:918px;" width="12" height="12" viewBox="0 0 12 12"><path d="M6 1 H1 V11 H11 V6" fill="none" stroke="#7d818b" stroke-width="1.1"/><path d="M5 7 L11 1" stroke="#7d818b" stroke-width="1.1"/></svg>
<div class="t" style="left:668px;top:916px;height:18px;line-height:18px;font-size:13px;color:#9a9da5;font-weight:bold;">社区指标</div>
<div class="t" style="left:1784px;top:916px;height:18px;line-height:18px;font-size:13px;color:#8a8d94;font-weight:normal;">对数</div>
<div class="t" style="left:1819px;top:916px;height:18px;line-height:18px;font-size:13px;color:#8a8d94;font-weight:normal;">%</div>
<div class="t" style="left:1840px;top:916px;height:18px;line-height:18px;font-size:13px;color:#1e80ff;font-weight:normal;">自动</div>
<div class="t" style="left:78px;top:945px;height:18px;line-height:18px;font-size:13px;color:#dcdcdc;font-weight:normal;">15分</div>
<div class="t" style="left:118px;top:945px;height:18px;line-height:18px;font-size:13px;color:#dcdcdc;font-weight:normal;">45分</div>
<div class="t" style="left:158px;top:945px;height:18px;line-height:18px;font-size:13px;color:#1e80ff;font-weight:normal;">4时</div>
<div class="t" style="left:190px;top:945px;height:18px;line-height:18px;font-size:13px;color:#dcdcdc;font-weight:normal;">8时</div>
<div class="t" style="left:223px;top:945px;height:18px;line-height:18px;font-size:13px;color:#dcdcdc;font-weight:normal;">1日</div>
<div class="t" style="left:255px;top:945px;height:18px;line-height:18px;font-size:13px;color:#dcdcdc;font-weight:normal;">1秒</div>
<div class="t" style="left:288px;top:945px;height:18px;line-height:18px;font-size:13px;color:#dcdcdc;font-weight:normal;">30秒</div>
<div class="t" style="left:328px;top:945px;height:18px;line-height:18px;font-size:13px;color:#dcdcdc;font-weight:normal;">分时</div>
<div class="t" style="left:366px;top:945px;height:18px;line-height:18px;font-size:13px;color:#dcdcdc;font-weight:normal;">1分</div>
<div class="t" style="left:398px;top:945px;height:18px;line-height:18px;font-size:13px;color:#dcdcdc;font-weight:normal;">5分</div>
<div class="t" style="left:430px;top:945px;height:18px;line-height:18px;font-size:13px;color:#dcdcdc;font-weight:normal;">10分</div>
<div class="t" style="left:470px;top:945px;height:18px;line-height:18px;font-size:13px;color:#dcdcdc;font-weight:normal;">30分</div>
<div class="t" style="left:510px;top:945px;height:18px;line-height:18px;font-size:13px;color:#dcdcdc;font-weight:normal;">1时</div>
<div class="t" style="left:543px;top:945px;height:18px;line-height:18px;font-size:13px;color:#dcdcdc;font-weight:normal;">2时</div>
<div class="t" style="left:575px;top:945px;height:18px;line-height:18px;font-size:13px;color:#dcdcdc;font-weight:normal;">3时</div>
<div class="t" style="left:607px;top:945px;height:18px;line-height:18px;font-size:13px;color:#dcdcdc;font-weight:normal;">12时</div>
<div class="t" style="left:646px;top:945px;height:18px;line-height:18px;font-size:13px;color:#dcdcdc;font-weight:normal;">2日</div>
<div class="t" style="left:679px;top:945px;height:18px;line-height:18px;font-size:13px;color:#dcdcdc;font-weight:normal;">3日</div>
<div class="t" style="left:712px;top:945px;height:18px;line-height:18px;font-size:13px;color:#dcdcdc;font-weight:normal;">周K</div>
<div class="t" style="left:746px;top:945px;height:18px;line-height:18px;font-size:13px;color:#dcdcdc;font-weight:normal;">15日</div>
<div class="t" style="left:785px;top:945px;height:18px;line-height:18px;font-size:13px;color:#dcdcdc;font-weight:normal;">月K</div>
<div class="t" style="left:819px;top:945px;height:18px;line-height:18px;font-size:13px;color:#dcdcdc;font-weight:normal;">季K</div>
<div class="t" style="left:853px;top:945px;height:18px;line-height:18px;font-size:13px;color:#dcdcdc;font-weight:normal;">年K</div>
<svg style="left:892px;top:949px;" width="8" height="8" viewBox="0 0 8 8"><path d="M1 1 L7 7 M7 1 L1 7" stroke="#8a8d94" stroke-width="1.1"/></svg>
<div class="r" style="left:960px;top:964px;width:30px;height:8px;background:#3a3b42;border-radius:3px 3px 0 0"></div>
<svg style="left:970px;top:965px;" width="10" height="6" viewBox="0 0 10 6"><path d="M1 5 L5 1 L9 5Z" fill="#a8abb2"/></svg>
<div class="r" style="left:70px;top:968px;width:1802px;height:4px;background:#000000;"></div>
<div class="t" style="left:90px;top:979.5px;height:19px;line-height:19px;font-size:14px;color:#1e80ff;font-weight:normal;">委单区</div>
<div class="t" style="left:172px;top:979.5px;height:19px;line-height:19px;font-size:14px;color:#d8d8d8;font-weight:normal;">自定义指标/回测/实盘</div>
<div class="t" style="left:349px;top:979.5px;height:19px;line-height:19px;font-size:14px;color:#d8d8d8;font-weight:normal;">AI 网格</div>
<div class="t" style="left:434px;top:979.5px;height:19px;line-height:19px;font-size:14px;color:#d8d8d8;font-weight:normal;">现货DCA</div>
<div class="t" style="left:530px;top:979.5px;height:19px;line-height:19px;font-size:14px;color:#d8d8d8;font-weight:normal;">组合下单</div>
<div class="t" style="left:641px;top:979.5px;height:19px;line-height:19px;font-size:14px;color:#d8d8d8;font-weight:normal;">AI分析</div>
<svg style="left:1826px;top:984px;" width="12" height="8" viewBox="0 0 12 8"><path d="M1 7 L6 2 L11 7" fill="none" stroke="#a8abb2" stroke-width="1.3"/></svg>
<svg style="left:1850px;top:982px;" width="15" height="15" viewBox="0 0 15 15"><rect x="0.7" y="0.7" width="13.6" height="13.6" rx="1" fill="none" stroke="#a8abb2" stroke-width="1.3"/><path d="M4 7 V4 H7 M11 8 V11 H8" fill="none" stroke="#a8abb2" stroke-width="1.2"/></svg>
<div class="t" style="left:78px;top:1013px;height:18px;line-height:18px;font-size:13px;color:#c8c8c8;font-weight:normal;">资产(&#8366;)</div>
<div class="t" style="left:139px;top:1013px;height:18px;line-height:18px;font-size:13px;color:#1e80ff;font-weight:normal;">链上链下资产分析</div>
<svg style="left:285px;top:1014px;" width="14" height="14" viewBox="0 0 14 14"><path d="M1 13 V10 L9 2 L12 5 L4 13Z" fill="#8a8d94"/><path d="M7 13 H13" stroke="#8a8d94" stroke-width="1.3"/></svg>
<div class="r" style="left:321px;top:1011px;width:38px;height:20px;background:#0f2035;border-radius:10px"></div>
<div class="t" style="left:328px;top:1013px;height:18px;line-height:18px;font-size:13px;color:#1e80ff;font-weight:normal;">主力</div>
<div class="t" style="left:369px;top:1013px;height:18px;line-height:18px;font-size:13px;color:#d8d8d8;font-weight:normal;">BTC主力24H挂单</div>
<div class="t" style="left:473px;top:1013px;height:18px;line-height:18px;font-size:13px;color:#f0a23a;font-weight:normal;">45.01亿美元</div>
<svg style="left:1646px;top:1013px;" width="15" height="16" viewBox="0 0 15 16"><path d="M0 1 H15 V14 H5 L0 16Z" fill="#5e6169"/><text x="7.5" y="11.5" font-size="10" fill="#111215" font-weight="bold" text-anchor="middle" font-family="Liberation Sans">?</text></svg>
<svg style="left:1673px;top:1014px;" width="17" height="13" viewBox="0 0 17 13"><path d="M1 4.5 a11 11 0 0 1 15 0 M3.5 7.5 a7.5 7.5 0 0 1 10 0 M6 10.5 a3.5 3.5 0 0 1 5 0" fill="none" stroke="#a8abb2" stroke-width="1.4"/><circle cx="8.5" cy="12" r="1" fill="#a8abb2"/></svg>
<div class="t" style="left:1700px;top:1013px;height:18px;line-height:18px;font-size:13px;color:#c8c8c8;font-weight:normal;">线路 3 :</div>
<div class="t" style="left:1747px;top:1013px;height:18px;line-height:18px;font-size:13px;color:#2bb37a;font-weight:normal;">优</div>
<div class="t" style="left:1787px;top:1013px;height:18px;line-height:18px;font-size:13px;color:#d8d8d8;font-weight:normal;">SGT&nbsp;&nbsp;10/24 17:21:04</div>
<div class="r" style="left:0px;top:0px;width:1920px;height:1px;background:#25272c;"></div>
<div class="r" style="left:0px;top:0px;width:1px;height:1040px;background:#25272c;"></div>
<div class="r" style="left:1919px;top:0px;width:1px;height:1040px;background:#25272c;"></div>
<div class="r" style="left:0px;top:1039px;width:1920px;height:1px;background:#25272c;"></div>
</body></html>
